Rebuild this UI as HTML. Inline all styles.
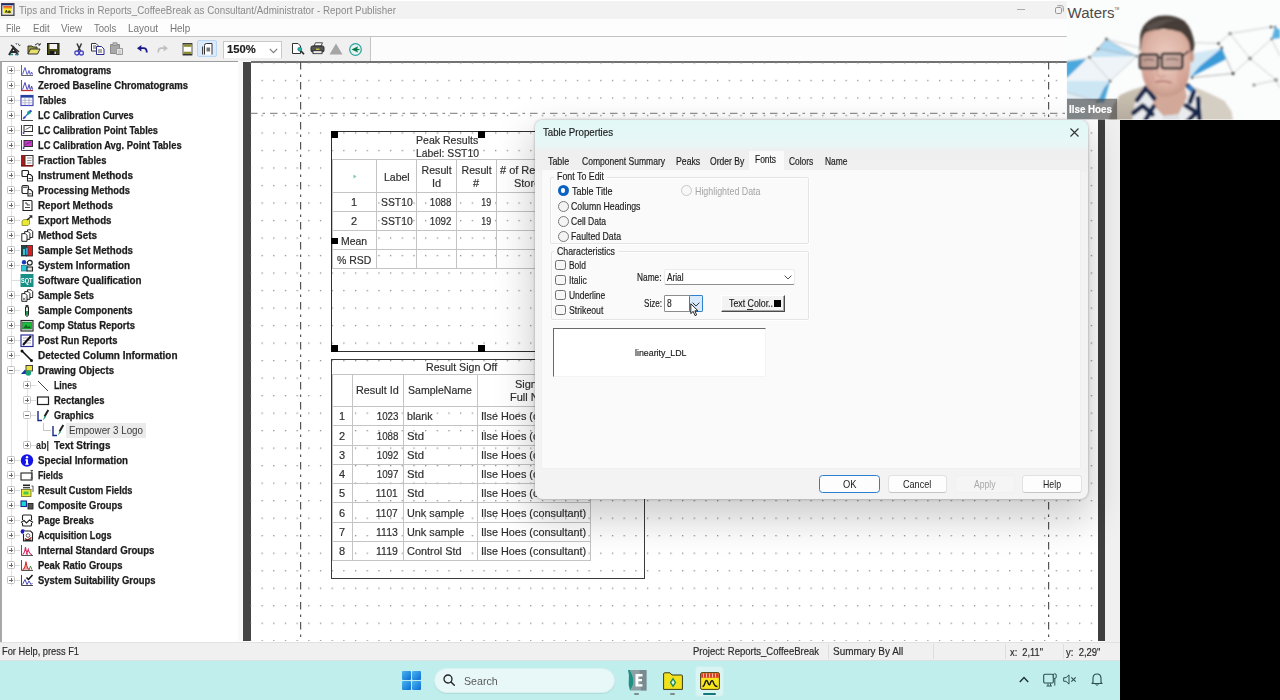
<!DOCTYPE html>
<html lang="en"><head><meta charset="utf-8"><title>Report Publisher</title>
<style>
html,body{margin:0;padding:0;background:#fff;}
body{width:1280px;height:700px;overflow:hidden;font-family:"Liberation Sans",sans-serif;}
#root{position:relative;width:1280px;height:700px;overflow:hidden;background:#fff;}
#root div,#root svg,.t{position:absolute;box-sizing:border-box;}
.t{white-space:pre;}
#root svg{overflow:visible;}

</style></head>
<body>
<div id="root">
<div style="left:0px;top:0px;width:1280px;height:19px;background:#f2f2f2;border-top:1.4px solid #fff;"></div>
<svg style="left:1.3px;top:3px" width="13.6" height="13" viewBox="0 0 13.6 13"><rect x=".65" y=".65" width="12.3" height="11.7" fill="#e9e4ea" stroke="#474749" stroke-width="1.3"/><rect x="1" y=".8" width="11.6" height="1.5" fill="#1c2c70"/><rect x="2.4" y="3.1" width="8.6" height="7.3" fill="#f0f02c"/><rect x="2.4" y="3.1" width="8.6" height="1.7" fill="#e8502a"/><rect x="2.4" y="4.6" width="8.6" height="1" fill="#f4a02a"/><path d="M4.2 9.6 L5.4 7 L6.4 9.6 M7 9.6 Q7 7.6 8.4 7.8 Q9.6 8 9.4 9.6 Z" fill="#3c3c10" stroke="#3c3c10" stroke-width=".8"/></svg>
<span class="t" style="left:19.40px;top:3.60px;font-size:10.3px;line-height:14px;color:#8a8a8a;transform:scaleX(0.9503);transform-origin:0 50%;">Tips and Tricks in Reports_CoffeeBreak as Consultant/Administrator - Report Publisher</span>
<div style="left:1017px;top:8.5px;width:7.5px;height:1px;background:#ababab;"></div>
<svg style="left:1055px;top:5px" width="9" height="9" viewBox="0 0 9 9"><rect x="0.5" y="2.5" width="6" height="6" rx="1.3" fill="none" stroke="#999"/><path d="M2.5 .7 H6.5 Q8.3 .7 8.3 2.5 V6.5" fill="none" stroke="#999"/></svg>
<div style="left:0px;top:19px;width:1280px;height:17px;background:#fdfdfd;"></div>
<span class="t" style="left:6.00px;top:21.50px;font-size:10.3px;line-height:14px;color:#767676;transform:scaleX(0.8798);transform-origin:0 50%;">File</span>
<span class="t" style="left:32.80px;top:21.50px;font-size:10.3px;line-height:14px;color:#767676;transform:scaleX(0.9352);transform-origin:0 50%;">Edit</span>
<span class="t" style="left:61.00px;top:21.50px;font-size:10.3px;line-height:14px;color:#767676;transform:scaleX(0.9485);transform-origin:0 50%;">View</span>
<span class="t" style="left:94.40px;top:21.50px;font-size:10.3px;line-height:14px;color:#767676;transform:scaleX(0.9232);transform-origin:0 50%;">Tools</span>
<span class="t" style="left:128.40px;top:21.50px;font-size:10.3px;line-height:14px;color:#767676;transform:scaleX(0.9702);transform-origin:0 50%;">Layout</span>
<span class="t" style="left:170.30px;top:21.50px;font-size:10.3px;line-height:14px;color:#767676;transform:scaleX(0.9581);transform-origin:0 50%;">Help</span>
<div style="left:0px;top:36px;width:1280px;height:26px;background:#fcfcfc;"></div>
<div style="left:0px;top:36px;width:371px;height:25px;background:#f0f0f0;border-top:1px solid #cfcfcf;border-right:1px solid #c4c4c4;"></div>
<div style="left:0px;top:35.7px;width:1280px;height:1px;background:#c2c2c2;"></div>
<svg style="left:7px;top:42px" width="15" height="14" viewBox="0 0 15 14"><path d="M2 13 L6.5 5.5 L11 13 M4 10 H9" fill="none" stroke="#2a2a2a" stroke-width="2"/><path d="M4 3 L12 10" stroke="#333" stroke-width="1.6"/><path d="M11 1.5 l1 1.8 M13.5 3 l-1.5 .8 M9 1 l.5 1.5" stroke="#555" stroke-width="1"/><path d="M3 12.5 h3 M8 12.5 h3" stroke="#2a8a8a" stroke-width="1.6"/></svg>
<svg style="left:27px;top:42px" width="14" height="13" viewBox="0 0 14 13"><path d="M1 12 V4 H5 L6 5 H10 V7" fill="#9a9a3a" stroke="#333" stroke-width="1"/><path d="M1 12 L3.5 7 H13 L10.5 12 Z" fill="#e6e06a" stroke="#333" stroke-width="1"/><path d="M8 3 q3 -3 5 0 l-1.5 .2 M13 3 l.3 -1.8" fill="none" stroke="#333" stroke-width="1"/></svg>
<svg style="left:46.5px;top:42.5px" width="12.5" height="12" viewBox="0 0 12.5 12"><rect x=".5" y=".5" width="11.5" height="11" fill="#4a4a10" stroke="#1a1a1a"/><rect x="2.5" y="1" width="7.5" height="5" fill="#f4f4f4"/><rect x="3" y="8" width="6.5" height="3.5" fill="#1a1a1a"/><rect x="7.5" y="8.6" width="1.4" height="2.4" fill="#ddd"/></svg>
<svg style="left:74px;top:42.5px" width="10" height="13" viewBox="0 0 10 13"><path d="M3 0.5 L6.5 8 M7.5 0.5 L4 8" stroke="#333" stroke-width="1.5" fill="none"/><circle cx="2.8" cy="10" r="2" fill="none" stroke="#4646c8" stroke-width="1.3"/><circle cx="7.4" cy="10" r="2" fill="none" stroke="#4646c8" stroke-width="1.3"/></svg>
<svg style="left:90.5px;top:42.5px" width="14" height="12" viewBox="0 0 14 12"><path d="M.5 .5 H5 L7 2.5 V8 H.5 Z" fill="#fff" stroke="#333"/><path d="M2 3 H5 M2 5 H5" stroke="#555" stroke-width="1"/><path d="M5.5 3.5 H10.5 L13 6 V11.5 H5.5 Z" fill="#fff" stroke="#2a2a8a"/><path d="M7 7 H11 M7 9 H11" stroke="#555" stroke-width="1"/></svg>
<svg style="left:110px;top:42px" width="13" height="13" viewBox="0 0 13 13"><path d="M.5 2.5 H9.5 V11.5 H.5 Z" fill="#a8a8a8" stroke="#8a8a8a"/><rect x="3" y=".8" width="4" height="2.6" fill="#bdbdbd" stroke="#8a8a8a" stroke-width=".8"/><path d="M6.5 6.5 H12.5 V12.5 H6.5 Z" fill="#e6e6e6" stroke="#9a9a9a"/><path d="M8 9 H11 M8 11 H11" stroke="#aaa" stroke-width=".8"/></svg>
<svg style="left:137px;top:45px" width="11" height="8" viewBox="0 0 11 8"><path d="M2.5 3.2 H6.5 Q9.8 3.2 9.8 7.5" fill="none" stroke="#1a1a8c" stroke-width="1.8"/><path d="M0 3.2 L4.4 0 V6.4 Z" fill="#1a1a8c"/></svg>
<svg style="left:157px;top:45px" width="11" height="8" viewBox="0 0 11 8"><path d="M8.5 3.2 H4.5 Q1.2 3.2 1.2 7.5" fill="none" stroke="#c0c0c0" stroke-width="1.8"/><path d="M11 3.2 L6.6 0 V6.4 Z" fill="#c0c0c0"/></svg>
<svg style="left:181.5px;top:43px" width="11" height="12.5" viewBox="0 0 11 12.5"><rect x="1" y=".5" width="9" height="11.5" fill="#fff" stroke="#444" stroke-width=".9"/><rect x="1" y=".4" width="9" height="1.2" fill="#333"/><rect x="1.5" y="1.6" width="8" height="2.2" fill="#8c8c2c"/><rect x="1.5" y="8.7" width="8" height="2.2" fill="#8c8c2c"/><rect x="1" y="10.9" width="9" height="1.2" fill="#333"/></svg>
<div style="left:197px;top:40px;width:20px;height:17px;background:#dcebfb;border:1px solid #b9d7f5;border-radius:2px;"></div>
<svg style="left:202px;top:43px" width="11" height="12" viewBox="0 0 11 12"><path d="M2.5 11.5 V2.5 Q2.5 .5 4.5 .5 H10 V11.5" fill="#fff" stroke="#333"/><path d="M.6 11.5 V3.5" stroke="#333"/><rect x="4.5" y="4.5" width="3.6" height="4" fill="#777"/></svg>
<div style="left:223px;top:40.5px;width:59px;height:18px;background:#fff;border:1px solid #c9c9c9;border-bottom-color:#f0f0f0;"></div>
<span class="t" style="left:226.50px;top:41.40px;font-size:11.8px;line-height:17px;color:#1c1c1c;font-weight:bold;transform:scaleX(0.9540);transform-origin:0 50%;-webkit-text-stroke:.18px #1c1c1c;">150%</span>
<svg style="left:269px;top:47.5px" width="9" height="6" viewBox="0 0 9 6"><path d="M.8 .8 L4.5 4.6 L8.2 .8" fill="none" stroke="#777" stroke-width="1.1"/></svg>
<svg style="left:291.5px;top:43px" width="13" height="12" viewBox="0 0 13 12"><path d="M.5 .5 H6 L8.5 3 V10.5 H.5 Z" fill="#fff" stroke="#333"/><circle cx="7.8" cy="6.2" r="2" fill="#27b3a5" stroke="#1a6a6a" stroke-width=".6"/><path d="M9 8 L12 11.3" stroke="#222" stroke-width="1.6"/></svg>
<svg style="left:309.5px;top:42px" width="15" height="12.5" viewBox="0 0 15 12.5"><path d="M4 4 L5.5 .8 H12.5 L11 4 Z" fill="#fff" stroke="#333" stroke-width=".9"/><rect x="1" y="4" width="13" height="6" rx="1.5" fill="#555" stroke="#222" stroke-width=".9"/><rect x="3" y="8.7" width="9" height="3" fill="#e8e8e8" stroke="#222" stroke-width=".8"/><rect x="6" y="6.6" width="3.5" height="1.2" fill="#d8d83a"/></svg>
<svg style="left:329px;top:43px" width="14" height="12" viewBox="0 0 14 12"><path d="M7 .5 L13.5 11.5 H.5 Z" fill="#a6a6a6"/></svg>
<svg style="left:348.5px;top:42.5px" width="13" height="13" viewBox="0 0 13 13"><circle cx="6.5" cy="6.5" r="5.8" fill="#e8f4f4" stroke="#27a39a" stroke-width="1.2"/><path d="M2.5 6.5 L9 3.2 L8 6.5 L9 9.6 Z" fill="#0a7a4a"/><path d="M8 6.5 H10.5" stroke="#0a7a4a" stroke-width="1.2"/></svg>
<div style="left:0px;top:61px;width:238px;height:581px;background:#fff;border-top:1px solid #9c9c9c;border-left:2px solid #a8a8a8;"></div>
<div style="left:238px;top:62px;width:5px;height:579px;background:#f9f9f9;"></div>
<div style="left:11px;top:66px;width:1px;height:520px;background:#e2e2e2;"></div>
<div style="left:27px;top:378px;width:1px;height:72px;background:#e2e2e2;"></div>
<div style="left:11px;top:70px;width:9px;height:1px;background:#dcdcdc;"></div>
<div style="left:7.3px;top:66.3px;width:8px;height:8px;background:#fff;border:1px solid #c2c2c2;border-radius:1.5px;"></div>
<div style="left:9.3px;top:69.8px;width:4px;height:1px;background:#6a6a6a;"></div>
<div style="left:10.8px;top:68.3px;width:1px;height:4px;background:#6a6a6a;"></div>
<svg style="left:20px;top:63.8px" width="14" height="13" viewBox="0 0 14 13"><path d="M1.5 1 V11.5 H13" fill="none" stroke="#666" stroke-width="1"/><path d="M2.5 10.5 L5 3.5 L7 10.5 M7.5 10.5 L9 6.5 L10.2 10.5 M10.6 10.5 L11.6 8 L12.6 10.5" fill="none" stroke="#5a5ad0" stroke-width="1"/></svg>
<span class="t" style="left:38.00px;top:63.60px;font-size:10.2px;line-height:14px;color:#1c1c1c;font-weight:bold;transform:scaleX(0.9328);transform-origin:0 50%;-webkit-text-stroke:.25px #1c1c1c;">Chromatograms</span>
<div style="left:11px;top:85px;width:9px;height:1px;background:#dcdcdc;"></div>
<div style="left:7.3px;top:81.3px;width:8px;height:8px;background:#fff;border:1px solid #c2c2c2;border-radius:1.5px;"></div>
<div style="left:9.3px;top:84.8px;width:4px;height:1px;background:#6a6a6a;"></div>
<div style="left:10.8px;top:83.3px;width:1px;height:4px;background:#6a6a6a;"></div>
<svg style="left:20px;top:78.8px" width="14" height="13" viewBox="0 0 14 13"><path d="M1.5 1 V11.5" fill="none" stroke="#666" stroke-width="1"/><path d="M1 11.5 H13" stroke="#c03030" stroke-width="1.3"/><path d="M2.5 10.5 L5 3.5 L7 10.5 M7.5 10.5 L9 5.5 L10.2 10.5 M10.6 10.5 L11.6 7 L12.6 10.5" fill="none" stroke="#4a4ab8" stroke-width="1"/></svg>
<span class="t" style="left:38.00px;top:78.60px;font-size:10.2px;line-height:14px;color:#1c1c1c;font-weight:bold;transform:scaleX(0.9362);transform-origin:0 50%;-webkit-text-stroke:.25px #1c1c1c;">Zeroed Baseline Chromatograms</span>
<div style="left:11px;top:100px;width:9px;height:1px;background:#dcdcdc;"></div>
<div style="left:7.3px;top:96.3px;width:8px;height:8px;background:#fff;border:1px solid #c2c2c2;border-radius:1.5px;"></div>
<div style="left:9.3px;top:99.8px;width:4px;height:1px;background:#6a6a6a;"></div>
<div style="left:10.8px;top:98.3px;width:1px;height:4px;background:#6a6a6a;"></div>
<svg style="left:20px;top:93.8px" width="14" height="13" viewBox="0 0 14 13"><rect x="1" y="1.5" width="12" height="10" fill="#fff" stroke="#4a4ac4" stroke-width="1.2"/><rect x="1" y="1.2" width="12" height="2.4" fill="#1f3f9a"/><path d="M5 4 V11 M9 4 V11 M1.5 6.3 H12.5 M1.5 8.8 H12.5" stroke="#a8a8c8" stroke-width=".8"/></svg>
<span class="t" style="left:38.00px;top:93.60px;font-size:10.2px;line-height:14px;color:#1c1c1c;font-weight:bold;transform:scaleX(0.9039);transform-origin:0 50%;-webkit-text-stroke:.25px #1c1c1c;">Tables</span>
<div style="left:11px;top:115px;width:9px;height:1px;background:#dcdcdc;"></div>
<div style="left:7.3px;top:111.3px;width:8px;height:8px;background:#fff;border:1px solid #c2c2c2;border-radius:1.5px;"></div>
<div style="left:9.3px;top:114.8px;width:4px;height:1px;background:#6a6a6a;"></div>
<div style="left:10.8px;top:113.3px;width:1px;height:4px;background:#6a6a6a;"></div>
<svg style="left:20px;top:108.8px" width="14" height="13" viewBox="0 0 14 13"><path d="M1.5 1 V11.5 H13" fill="none" stroke="#444" stroke-width="1"/><path d="M3 10 L11 1.5" stroke="#3a78c8" stroke-width="1.2"/><path d="M7 3 l3 -2 l1 3 l-3 2z" fill="#18a090"/><circle cx="4.5" cy="8.5" r="1.1" fill="#3a3ac0"/><circle cx="10.8" cy="2.2" r="1" fill="#3a3ac0"/></svg>
<span class="t" style="left:38.00px;top:108.60px;font-size:10.2px;line-height:14px;color:#1c1c1c;font-weight:bold;transform:scaleX(0.8935);transform-origin:0 50%;-webkit-text-stroke:.25px #1c1c1c;">LC Calibration Curves</span>
<div style="left:11px;top:130px;width:9px;height:1px;background:#dcdcdc;"></div>
<div style="left:7.3px;top:126.30000000000001px;width:8px;height:8px;background:#fff;border:1px solid #c2c2c2;border-radius:1.5px;"></div>
<div style="left:9.3px;top:129.8px;width:4px;height:1px;background:#6a6a6a;"></div>
<div style="left:10.8px;top:128.3px;width:1px;height:4px;background:#6a6a6a;"></div>
<svg style="left:20px;top:123.80000000000001px" width="14" height="13" viewBox="0 0 14 13"><path d="M1.5 1 V11.5 H13" fill="none" stroke="#444" stroke-width="1"/><rect x="4" y="1.5" width="8.5" height="6" fill="#fff" stroke="#333" stroke-width="1"/><path d="M5.5 5.5 L11 2.8" stroke="#666" stroke-width=".9"/><circle cx="3.6" cy="9" r="1" fill="#3a3ac0"/></svg>
<span class="t" style="left:38.00px;top:123.60px;font-size:10.2px;line-height:14px;color:#1c1c1c;font-weight:bold;transform:scaleX(0.9073);transform-origin:0 50%;-webkit-text-stroke:.25px #1c1c1c;">LC Calibration Point Tables</span>
<div style="left:11px;top:145px;width:9px;height:1px;background:#dcdcdc;"></div>
<div style="left:7.3px;top:141.3px;width:8px;height:8px;background:#fff;border:1px solid #c2c2c2;border-radius:1.5px;"></div>
<div style="left:9.3px;top:144.8px;width:4px;height:1px;background:#6a6a6a;"></div>
<div style="left:10.8px;top:143.3px;width:1px;height:4px;background:#6a6a6a;"></div>
<svg style="left:20px;top:138.8px" width="14" height="13" viewBox="0 0 14 13"><path d="M1.5 1 V11.5 H13" fill="none" stroke="#444" stroke-width="1"/><rect x="4" y="1.5" width="8.5" height="6" fill="#c83ac8" stroke="#333" stroke-width="1"/><path d="M5.5 5.5 L11 2.8" stroke="#602a80" stroke-width=".9"/><circle cx="3.6" cy="9" r="1" fill="#3a3ac0"/></svg>
<span class="t" style="left:38.00px;top:138.60px;font-size:10.2px;line-height:14px;color:#1c1c1c;font-weight:bold;transform:scaleX(0.9180);transform-origin:0 50%;-webkit-text-stroke:.25px #1c1c1c;">LC Calibration Avg. Point Tables</span>
<div style="left:11px;top:160px;width:9px;height:1px;background:#dcdcdc;"></div>
<div style="left:7.3px;top:156.3px;width:8px;height:8px;background:#fff;border:1px solid #c2c2c2;border-radius:1.5px;"></div>
<div style="left:9.3px;top:159.8px;width:4px;height:1px;background:#6a6a6a;"></div>
<div style="left:10.8px;top:158.3px;width:1px;height:4px;background:#6a6a6a;"></div>
<svg style="left:20px;top:153.8px" width="14" height="13" viewBox="0 0 14 13"><rect x="1" y="1" width="4" height="11" fill="#b01818"/><rect x="5" y="1.5" width="8" height="10" fill="#fff" stroke="#333" stroke-width="1"/><path d="M7 4 H11.5 M7 6.5 H11.5 M7 9 H11.5" stroke="#777" stroke-width=".8"/><rect x="1" y="11" width="12" height="1.6" fill="#801010"/></svg>
<span class="t" style="left:38.00px;top:153.60px;font-size:10.2px;line-height:14px;color:#1c1c1c;font-weight:bold;transform:scaleX(0.9189);transform-origin:0 50%;-webkit-text-stroke:.25px #1c1c1c;">Fraction Tables</span>
<div style="left:11px;top:175px;width:9px;height:1px;background:#dcdcdc;"></div>
<div style="left:7.3px;top:171.3px;width:8px;height:8px;background:#fff;border:1px solid #c2c2c2;border-radius:1.5px;"></div>
<div style="left:9.3px;top:174.8px;width:4px;height:1px;background:#6a6a6a;"></div>
<div style="left:10.8px;top:173.3px;width:1px;height:4px;background:#6a6a6a;"></div>
<svg style="left:20px;top:168.8px" width="14" height="13" viewBox="0 0 14 13"><rect x="2" y="1.5" width="6.5" height="6" rx="1" fill="#fff" stroke="#222" stroke-width="1.2"/><path d="M7.5 5.5 H10.5 L12.5 7.5 V12 H7.5 Z" fill="#fff" stroke="#222" stroke-width="1.1"/><path d="M8.5 9.5 H11.5" stroke="#222" stroke-width=".9"/></svg>
<span class="t" style="left:38.00px;top:168.60px;font-size:10.2px;line-height:14px;color:#1c1c1c;font-weight:bold;transform:scaleX(0.9758);transform-origin:0 50%;-webkit-text-stroke:.25px #1c1c1c;">Instrument Methods</span>
<div style="left:11px;top:190px;width:9px;height:1px;background:#dcdcdc;"></div>
<div style="left:7.3px;top:186.3px;width:8px;height:8px;background:#fff;border:1px solid #c2c2c2;border-radius:1.5px;"></div>
<div style="left:9.3px;top:189.8px;width:4px;height:1px;background:#6a6a6a;"></div>
<div style="left:10.8px;top:188.3px;width:1px;height:4px;background:#6a6a6a;"></div>
<svg style="left:20px;top:183.8px" width="14" height="13" viewBox="0 0 14 13"><rect x="2" y="1.5" width="6.5" height="8" rx="1.5" fill="#fff" stroke="#222" stroke-width="1.2"/><path d="M3 3.2 H7.5" stroke="#222" stroke-width="1"/><path d="M8 5.5 H10.5 L12.5 7.5 V12 H8 Z" fill="#fff" stroke="#222" stroke-width="1.1"/><path d="M9 9.8 H11.5" stroke="#222" stroke-width=".9"/></svg>
<span class="t" style="left:38.00px;top:183.60px;font-size:10.2px;line-height:14px;color:#1c1c1c;font-weight:bold;transform:scaleX(0.9233);transform-origin:0 50%;-webkit-text-stroke:.25px #1c1c1c;">Processing Methods</span>
<div style="left:11px;top:205px;width:9px;height:1px;background:#dcdcdc;"></div>
<div style="left:7.3px;top:201.3px;width:8px;height:8px;background:#fff;border:1px solid #c2c2c2;border-radius:1.5px;"></div>
<div style="left:9.3px;top:204.8px;width:4px;height:1px;background:#6a6a6a;"></div>
<div style="left:10.8px;top:203.3px;width:1px;height:4px;background:#6a6a6a;"></div>
<svg style="left:20px;top:198.8px" width="14" height="13" viewBox="0 0 14 13"><path d="M3 1.5 H11 Q12 1.5 12 2.5 V11.5 H3 Z" fill="#fff" stroke="#222" stroke-width="1.1"/><path d="M5 4 H7 V6 H10 M5 8.5 H10" fill="none" stroke="#333" stroke-width=".9"/></svg>
<span class="t" style="left:38.00px;top:198.60px;font-size:10.2px;line-height:14px;color:#1c1c1c;font-weight:bold;transform:scaleX(0.9672);transform-origin:0 50%;-webkit-text-stroke:.25px #1c1c1c;">Report Methods</span>
<div style="left:11px;top:220px;width:9px;height:1px;background:#dcdcdc;"></div>
<div style="left:7.3px;top:216.3px;width:8px;height:8px;background:#fff;border:1px solid #c2c2c2;border-radius:1.5px;"></div>
<div style="left:9.3px;top:219.8px;width:4px;height:1px;background:#6a6a6a;"></div>
<div style="left:10.8px;top:218.3px;width:1px;height:4px;background:#6a6a6a;"></div>
<svg style="left:20px;top:213.8px" width="14" height="13" viewBox="0 0 14 13"><path d="M2 7 L4 5.5 H9.5 V10 L8 11.5 H2 Z" fill="#e8e838" stroke="#8a8a20" stroke-width=".8"/><path d="M7 6 L11 2.5" stroke="#222" stroke-width="1.3"/><path d="M9 1.2 H12.3 V4.5 Z" fill="#222"/></svg>
<span class="t" style="left:38.00px;top:213.60px;font-size:10.2px;line-height:14px;color:#1c1c1c;font-weight:bold;transform:scaleX(0.9547);transform-origin:0 50%;-webkit-text-stroke:.25px #1c1c1c;">Export Methods</span>
<div style="left:11px;top:235px;width:9px;height:1px;background:#dcdcdc;"></div>
<div style="left:7.3px;top:231.3px;width:8px;height:8px;background:#fff;border:1px solid #c2c2c2;border-radius:1.5px;"></div>
<div style="left:9.3px;top:234.8px;width:4px;height:1px;background:#6a6a6a;"></div>
<div style="left:10.8px;top:233.3px;width:1px;height:4px;background:#6a6a6a;"></div>
<svg style="left:20px;top:228.8px" width="14" height="13" viewBox="0 0 14 13"><path d="M7.5 .8 H11 L12.7 2.5 V8.5 H7.5 Z" fill="#fff" stroke="#222" stroke-width="1"/><path d="M4.7 2.6 H8.2 L9.9 4.3 V10.3 H4.7 Z" fill="#fff" stroke="#222" stroke-width="1"/><path d="M1.8 4.6 H5.3 L7 6.3 V12.3 H1.8 Z" fill="#fff" stroke="#222" stroke-width="1"/></svg>
<span class="t" style="left:38.00px;top:228.60px;font-size:10.2px;line-height:14px;color:#1c1c1c;font-weight:bold;transform:scaleX(0.9739);transform-origin:0 50%;-webkit-text-stroke:.25px #1c1c1c;">Method Sets</span>
<div style="left:11px;top:250px;width:9px;height:1px;background:#dcdcdc;"></div>
<div style="left:7.3px;top:246.3px;width:8px;height:8px;background:#fff;border:1px solid #c2c2c2;border-radius:1.5px;"></div>
<div style="left:9.3px;top:249.8px;width:4px;height:1px;background:#6a6a6a;"></div>
<div style="left:10.8px;top:248.3px;width:1px;height:4px;background:#6a6a6a;"></div>
<svg style="left:20px;top:243.8px" width="14" height="13" viewBox="0 0 14 13"><rect x="1.5" y="1.5" width="5" height="10.5" fill="#1a4a4a" stroke="#222" stroke-width=".8"/><rect x="6.5" y="1.5" width="6" height="10.5" fill="#d82020" stroke="#222" stroke-width=".8"/><rect x="3" y="5" width="2.2" height="6" fill="#38c8d8"/><rect x="5.8" y="3.5" width="2.2" height="7.5" fill="#38a8d8" stroke="#1a3a5a" stroke-width=".5"/></svg>
<span class="t" style="left:38.00px;top:243.60px;font-size:10.2px;line-height:14px;color:#1c1c1c;font-weight:bold;transform:scaleX(0.9534);transform-origin:0 50%;-webkit-text-stroke:.25px #1c1c1c;">Sample Set Methods</span>
<div style="left:11px;top:265px;width:9px;height:1px;background:#dcdcdc;"></div>
<div style="left:7.3px;top:261.3px;width:8px;height:8px;background:#fff;border:1px solid #c2c2c2;border-radius:1.5px;"></div>
<div style="left:9.3px;top:264.8px;width:4px;height:1px;background:#6a6a6a;"></div>
<div style="left:10.8px;top:263.3px;width:1px;height:4px;background:#6a6a6a;"></div>
<svg style="left:20px;top:258.8px" width="14" height="13" viewBox="0 0 14 13"><circle cx="4" cy="3.2" r="2.2" fill="#1a3ab8"/><rect x="1.5" y="6.5" width="6" height="5.5" fill="#28c8d8" stroke="#1a5a6a" stroke-width=".6"/><circle cx="9.8" cy="3.8" r="2.4" fill="#fff" stroke="#222" stroke-width="1.2"/><path d="M7 8 H12.5 V12 H7 Z" fill="#ddd" stroke="#222" stroke-width="1.1"/></svg>
<span class="t" style="left:38.00px;top:258.60px;font-size:10.2px;line-height:14px;color:#1c1c1c;font-weight:bold;transform:scaleX(0.9673);transform-origin:0 50%;-webkit-text-stroke:.25px #1c1c1c;">System Information</span>
<div style="left:11px;top:280px;width:9px;height:1px;background:#dcdcdc;"></div>
<svg style="left:20px;top:273.8px" width="14" height="13" viewBox="0 0 14 13"><rect x="0.5" y="0" width="13" height="13" fill="#189088"/></svg>
<span class="t" style="left:21.30px;top:275.30px;font-size:8px;line-height:11px;color:#fff;font-weight:bold;transform:scaleX(0.6990);transform-origin:0 50%;">SQT</span>
<span class="t" style="left:38.00px;top:273.60px;font-size:10.2px;line-height:14px;color:#1c1c1c;font-weight:bold;transform:scaleX(0.9622);transform-origin:0 50%;-webkit-text-stroke:.25px #1c1c1c;">Software Qualification</span>
<div style="left:11px;top:295px;width:9px;height:1px;background:#dcdcdc;"></div>
<div style="left:7.3px;top:291.3px;width:8px;height:8px;background:#fff;border:1px solid #c2c2c2;border-radius:1.5px;"></div>
<div style="left:9.3px;top:294.8px;width:4px;height:1px;background:#6a6a6a;"></div>
<div style="left:10.8px;top:293.3px;width:1px;height:4px;background:#6a6a6a;"></div>
<svg style="left:20px;top:288.8px" width="14" height="13" viewBox="0 0 14 13"><path d="M7.5 .8 H11 L12.7 2.5 V8.5 H7.5 Z" fill="#fff" stroke="#222" stroke-width="1"/><path d="M4.7 2.6 H8.2 L9.9 4.3 V10.3 H4.7 Z" fill="#fff" stroke="#222" stroke-width="1"/><path d="M1.8 4.6 H5.3 L7 6.3 V12.3 H1.8 Z" fill="#fff" stroke="#222" stroke-width="1"/><path d="M3 9 L5.5 11 M3 11 L5.5 9" stroke="#555" stroke-width=".8"/></svg>
<span class="t" style="left:38.00px;top:288.60px;font-size:10.2px;line-height:14px;color:#1c1c1c;font-weight:bold;transform:scaleX(0.9242);transform-origin:0 50%;-webkit-text-stroke:.25px #1c1c1c;">Sample Sets</span>
<div style="left:11px;top:310px;width:9px;height:1px;background:#dcdcdc;"></div>
<div style="left:7.3px;top:306.3px;width:8px;height:8px;background:#fff;border:1px solid #c2c2c2;border-radius:1.5px;"></div>
<div style="left:9.3px;top:309.8px;width:4px;height:1px;background:#6a6a6a;"></div>
<div style="left:10.8px;top:308.3px;width:1px;height:4px;background:#6a6a6a;"></div>
<svg style="left:20px;top:303.8px" width="14" height="13" viewBox="0 0 14 13"><path d="M5.5 3 H8.5 V10 Q8.5 12.3 7 12.3 Q5.5 12.3 5.5 10 Z" fill="#e8f0e8" stroke="#222" stroke-width="1"/><rect x="5.6" y="1" width="2.8" height="2" fill="#333"/><path d="M6 7 H8 V10 Q8 11.5 7 11.5 Q6 11.5 6 10 Z" fill="#18a050"/></svg>
<span class="t" style="left:38.00px;top:303.60px;font-size:10.2px;line-height:14px;color:#1c1c1c;font-weight:bold;transform:scaleX(0.9326);transform-origin:0 50%;-webkit-text-stroke:.25px #1c1c1c;">Sample Components</span>
<div style="left:11px;top:325px;width:9px;height:1px;background:#dcdcdc;"></div>
<div style="left:7.3px;top:321.3px;width:8px;height:8px;background:#fff;border:1px solid #c2c2c2;border-radius:1.5px;"></div>
<div style="left:9.3px;top:324.8px;width:4px;height:1px;background:#6a6a6a;"></div>
<div style="left:10.8px;top:323.3px;width:1px;height:4px;background:#6a6a6a;"></div>
<svg style="left:20px;top:318.8px" width="14" height="13" viewBox="0 0 14 13"><rect x="1" y="1.5" width="12" height="10.5" fill="#e8e8e8" stroke="#222" stroke-width="1.1"/><rect x="2.6" y="3.2" width="8.8" height="6.8" fill="#18c038" stroke="#1a5a2a" stroke-width=".6"/><path d="M3.5 9 L6 5.5 L8 8 L9.5 6.5 L10.8 9" fill="#0a6a20"/></svg>
<span class="t" style="left:38.00px;top:318.60px;font-size:10.2px;line-height:14px;color:#1c1c1c;font-weight:bold;transform:scaleX(0.9313);transform-origin:0 50%;-webkit-text-stroke:.25px #1c1c1c;">Comp Status Reports</span>
<div style="left:11px;top:340px;width:9px;height:1px;background:#dcdcdc;"></div>
<div style="left:7.3px;top:336.3px;width:8px;height:8px;background:#fff;border:1px solid #c2c2c2;border-radius:1.5px;"></div>
<div style="left:9.3px;top:339.8px;width:4px;height:1px;background:#6a6a6a;"></div>
<div style="left:10.8px;top:338.3px;width:1px;height:4px;background:#6a6a6a;"></div>
<svg style="left:20px;top:333.8px" width="14" height="13" viewBox="0 0 14 13"><rect x="1" y="1" width="12" height="11.5" fill="#fff" stroke="#2a2a9a" stroke-width="1.2"/><path d="M3 4 H11 M3 6.5 H11 M3 9 H11" stroke="#9a9ab0" stroke-width=".8"/><path d="M3 11 L11 2" stroke="#111" stroke-width="2"/></svg>
<span class="t" style="left:38.00px;top:333.60px;font-size:10.2px;line-height:14px;color:#1c1c1c;font-weight:bold;transform:scaleX(0.9239);transform-origin:0 50%;-webkit-text-stroke:.25px #1c1c1c;">Post Run Reports</span>
<div style="left:11px;top:355px;width:9px;height:1px;background:#dcdcdc;"></div>
<div style="left:7.3px;top:351.3px;width:8px;height:8px;background:#fff;border:1px solid #c2c2c2;border-radius:1.5px;"></div>
<div style="left:9.3px;top:354.8px;width:4px;height:1px;background:#6a6a6a;"></div>
<div style="left:10.8px;top:353.3px;width:1px;height:4px;background:#6a6a6a;"></div>
<svg style="left:20px;top:348.8px" width="14" height="13" viewBox="0 0 14 13"><path d="M2 2 L11.5 11.5" stroke="#111" stroke-width="1.6"/><circle cx="2" cy="2" r="1.5" fill="#111"/><circle cx="11.5" cy="11.5" r="1.5" fill="#111"/></svg>
<span class="t" style="left:38.00px;top:348.60px;font-size:10.2px;line-height:14px;color:#1c1c1c;font-weight:bold;transform:scaleX(0.9780);transform-origin:0 50%;-webkit-text-stroke:.25px #1c1c1c;">Detected Column Information</span>
<div style="left:11px;top:370px;width:9px;height:1px;background:#dcdcdc;"></div>
<div style="left:7.3px;top:366.3px;width:8px;height:8px;background:#fff;border:1px solid #c2c2c2;border-radius:1.5px;"></div>
<div style="left:9.3px;top:369.8px;width:4px;height:1px;background:#6a6a6a;"></div>
<svg style="left:20px;top:363.8px" width="14" height="13" viewBox="0 0 14 13"><rect x="6" y="1.5" width="6.5" height="5.5" fill="#e8e040" stroke="#333" stroke-width=".9"/><path d="M1 10 L5 5.5 L8 10 Z" fill="#1a3a9a"/><circle cx="8.3" cy="9" r="2.8" fill="#18a078"/></svg>
<span class="t" style="left:38.00px;top:363.60px;font-size:10.2px;line-height:14px;color:#1c1c1c;font-weight:bold;transform:scaleX(0.9454);transform-origin:0 50%;-webkit-text-stroke:.25px #1c1c1c;">Drawing Objects</span>
<div style="left:27px;top:385px;width:9px;height:1px;background:#dcdcdc;"></div>
<div style="left:23.3px;top:381.3px;width:8px;height:8px;background:#fff;border:1px solid #c2c2c2;border-radius:1.5px;"></div>
<div style="left:25.3px;top:384.8px;width:4px;height:1px;background:#6a6a6a;"></div>
<div style="left:26.8px;top:383.3px;width:1px;height:4px;background:#6a6a6a;"></div>
<svg style="left:36px;top:378.8px" width="14" height="13" viewBox="0 0 14 13"><path d="M2 2 L12 12" stroke="#444" stroke-width="1"/></svg>
<span class="t" style="left:53.60px;top:378.60px;font-size:10.2px;line-height:14px;color:#1c1c1c;font-weight:bold;transform:scaleX(0.8606);transform-origin:0 50%;-webkit-text-stroke:.25px #1c1c1c;">Lines</span>
<div style="left:27px;top:400px;width:9px;height:1px;background:#dcdcdc;"></div>
<div style="left:23.3px;top:396.3px;width:8px;height:8px;background:#fff;border:1px solid #c2c2c2;border-radius:1.5px;"></div>
<div style="left:25.3px;top:399.8px;width:4px;height:1px;background:#6a6a6a;"></div>
<div style="left:26.8px;top:398.3px;width:1px;height:4px;background:#6a6a6a;"></div>
<svg style="left:36px;top:393.8px" width="14" height="13" viewBox="0 0 14 13"><rect x="1.5" y="3" width="11" height="7.5" fill="#fff" stroke="#222" stroke-width="1.2"/></svg>
<span class="t" style="left:53.60px;top:393.60px;font-size:10.2px;line-height:14px;color:#1c1c1c;font-weight:bold;transform:scaleX(0.9272);transform-origin:0 50%;-webkit-text-stroke:.25px #1c1c1c;">Rectangles</span>
<div style="left:27px;top:415px;width:9px;height:1px;background:#dcdcdc;"></div>
<div style="left:23.3px;top:411.3px;width:8px;height:8px;background:#fff;border:1px solid #c2c2c2;border-radius:1.5px;"></div>
<div style="left:25.3px;top:414.8px;width:4px;height:1px;background:#6a6a6a;"></div>
<svg style="left:36px;top:408.8px" width="14" height="13" viewBox="0 0 14 13"><path d="M2 2 V11.5 H6" fill="none" stroke="#1a2a8a" stroke-width="1.4"/><path d="M12.3 1 L8.5 7.5" stroke="#222" stroke-width="2"/><path d="M8.8 6.5 L6.8 11.5 L10 8" fill="#18a078"/></svg>
<span class="t" style="left:53.60px;top:408.60px;font-size:10.2px;line-height:14px;color:#1c1c1c;font-weight:bold;transform:scaleX(0.9033);transform-origin:0 50%;-webkit-text-stroke:.25px #1c1c1c;">Graphics</span>
<div style="left:43px;top:423.3px;width:1px;height:8px;background:#c8c8c8;"></div>
<div style="left:43px;top:430px;width:8px;height:1px;background:#c8c8c8;"></div>
<svg style="left:51px;top:423.8px" width="14" height="13" viewBox="0 0 14 13"><path d="M2 2 V11.5 H6" fill="none" stroke="#1a2a8a" stroke-width="1.4"/><path d="M12.3 1 L8.5 7.5" stroke="#222" stroke-width="2"/><path d="M8.8 6.5 L6.8 11.5 L10 8" fill="#18a078"/></svg>
<div style="left:66px;top:422.8px;width:80px;height:15px;background:#ebebeb;"></div>
<span class="t" style="left:69.00px;top:423.60px;font-size:10.2px;line-height:14px;color:#3a3a3a;transform:scaleX(0.9606);transform-origin:0 50%;">Empower 3 Logo</span>
<div style="left:27px;top:445px;width:9px;height:1px;background:#dcdcdc;"></div>
<div style="left:23.3px;top:441.3px;width:8px;height:8px;background:#fff;border:1px solid #c2c2c2;border-radius:1.5px;"></div>
<div style="left:25.3px;top:444.8px;width:4px;height:1px;background:#6a6a6a;"></div>
<div style="left:26.8px;top:443.3px;width:1px;height:4px;background:#6a6a6a;"></div>
<span class="t" style="left:36.00px;top:438.60px;font-size:10.2px;line-height:14px;color:#222;font-weight:bold;transform:scaleX(0.8814);transform-origin:0 50%;">ab|</span>
<span class="t" style="left:53.60px;top:438.60px;font-size:10.2px;line-height:14px;color:#1c1c1c;font-weight:bold;transform:scaleX(0.9703);transform-origin:0 50%;-webkit-text-stroke:.25px #1c1c1c;">Text Strings</span>
<div style="left:11px;top:460px;width:9px;height:1px;background:#dcdcdc;"></div>
<div style="left:7.3px;top:456.3px;width:8px;height:8px;background:#fff;border:1px solid #c2c2c2;border-radius:1.5px;"></div>
<div style="left:9.3px;top:459.8px;width:4px;height:1px;background:#6a6a6a;"></div>
<div style="left:10.8px;top:458.3px;width:1px;height:4px;background:#6a6a6a;"></div>
<svg style="left:20px;top:453.8px" width="14" height="13" viewBox="0 0 14 13"><circle cx="7" cy="6.5" r="6.2" fill="#1414e8"/><rect x="6" y="5.4" width="2" height="5" fill="#fff"/><rect x="5.2" y="5.4" width="2" height="1.2" fill="#fff"/><rect x="5.2" y="9.6" width="3.6" height="1.1" fill="#fff"/><circle cx="7" cy="3.3" r="1.2" fill="#fff"/></svg>
<span class="t" style="left:38.00px;top:453.60px;font-size:10.2px;line-height:14px;color:#1c1c1c;font-weight:bold;transform:scaleX(0.9519);transform-origin:0 50%;-webkit-text-stroke:.25px #1c1c1c;">Special Information</span>
<div style="left:11px;top:475px;width:9px;height:1px;background:#dcdcdc;"></div>
<div style="left:7.3px;top:471.3px;width:8px;height:8px;background:#fff;border:1px solid #c2c2c2;border-radius:1.5px;"></div>
<div style="left:9.3px;top:474.8px;width:4px;height:1px;background:#6a6a6a;"></div>
<div style="left:10.8px;top:473.3px;width:1px;height:4px;background:#6a6a6a;"></div>
<svg style="left:20px;top:468.8px" width="14" height="13" viewBox="0 0 14 13"><rect x="1" y="4" width="11" height="7" fill="#fff" stroke="#222" stroke-width="1.1"/><path d="M10.5 1.5 H13 M11.8 1.5 V9 M10.5 9 H13" stroke="#444" stroke-width=".9"/></svg>
<span class="t" style="left:38.00px;top:468.60px;font-size:10.2px;line-height:14px;color:#1c1c1c;font-weight:bold;transform:scaleX(0.8488);transform-origin:0 50%;-webkit-text-stroke:.25px #1c1c1c;">Fields</span>
<div style="left:11px;top:490px;width:9px;height:1px;background:#dcdcdc;"></div>
<div style="left:7.3px;top:486.3px;width:8px;height:8px;background:#fff;border:1px solid #c2c2c2;border-radius:1.5px;"></div>
<div style="left:9.3px;top:489.8px;width:4px;height:1px;background:#6a6a6a;"></div>
<div style="left:10.8px;top:488.3px;width:1px;height:4px;background:#6a6a6a;"></div>
<svg style="left:20px;top:483.8px" width="14" height="13" viewBox="0 0 14 13"><rect x="3" y="0.5" width="7" height="1.6" fill="#222"/><rect x="3" y="3" width="7" height="1.4" fill="#444"/><path d="M11.5 2 H13 V8" fill="none" stroke="#444" stroke-width=".9"/><rect x="1.5" y="5.5" width="9.5" height="7" fill="#e8e838" stroke="#6a6a20" stroke-width=".8"/><rect x="3.5" y="7.5" width="5" height="3" fill="#48c848"/></svg>
<span class="t" style="left:38.00px;top:483.60px;font-size:10.2px;line-height:14px;color:#1c1c1c;font-weight:bold;transform:scaleX(0.9073);transform-origin:0 50%;-webkit-text-stroke:.25px #1c1c1c;">Result Custom Fields</span>
<div style="left:11px;top:505px;width:9px;height:1px;background:#dcdcdc;"></div>
<div style="left:7.3px;top:501.3px;width:8px;height:8px;background:#fff;border:1px solid #c2c2c2;border-radius:1.5px;"></div>
<div style="left:9.3px;top:504.8px;width:4px;height:1px;background:#6a6a6a;"></div>
<div style="left:10.8px;top:503.3px;width:1px;height:4px;background:#6a6a6a;"></div>
<svg style="left:20px;top:498.8px" width="14" height="13" viewBox="0 0 14 13"><rect x="1" y="2" width="5.5" height="5.5" fill="#18d8d8" stroke="#1a2a8a" stroke-width="1.1"/><rect x="8" y="4.5" width="5" height="5.5" fill="#555" stroke="#222" stroke-width=".9"/></svg>
<span class="t" style="left:38.00px;top:498.60px;font-size:10.2px;line-height:14px;color:#1c1c1c;font-weight:bold;transform:scaleX(0.9215);transform-origin:0 50%;-webkit-text-stroke:.25px #1c1c1c;">Composite Groups</span>
<div style="left:11px;top:520px;width:9px;height:1px;background:#dcdcdc;"></div>
<div style="left:7.3px;top:516.3px;width:8px;height:8px;background:#fff;border:1px solid #c2c2c2;border-radius:1.5px;"></div>
<div style="left:9.3px;top:519.8px;width:4px;height:1px;background:#6a6a6a;"></div>
<div style="left:10.8px;top:518.3px;width:1px;height:4px;background:#6a6a6a;"></div>
<svg style="left:20px;top:513.8px" width="14" height="13" viewBox="0 0 14 13"><path d="M2.5 6 V2 Q2.5 1 3.5 1 H10.5 Q11.5 1 11.5 2 V6 M2.5 9 V11 Q2.5 12 3.5 12 H10.5 Q11.5 12 11.5 11 V9" fill="#fff" stroke="#222" stroke-width="1.1"/><path d="M1 8.5 L4 6.5 L6.5 9 L9.5 6 L13 8.5" fill="none" stroke="#222" stroke-width="1.1"/></svg>
<span class="t" style="left:38.00px;top:513.60px;font-size:10.2px;line-height:14px;color:#1c1c1c;font-weight:bold;transform:scaleX(0.9155);transform-origin:0 50%;-webkit-text-stroke:.25px #1c1c1c;">Page Breaks</span>
<div style="left:11px;top:535px;width:9px;height:1px;background:#dcdcdc;"></div>
<div style="left:7.3px;top:531.3px;width:8px;height:8px;background:#fff;border:1px solid #c2c2c2;border-radius:1.5px;"></div>
<div style="left:9.3px;top:534.8px;width:4px;height:1px;background:#6a6a6a;"></div>
<div style="left:10.8px;top:533.3px;width:1px;height:4px;background:#6a6a6a;"></div>
<svg style="left:20px;top:528.8px" width="14" height="13" viewBox="0 0 14 13"><circle cx="2.8" cy="2.5" r="2.2" fill="#1a1ac8"/><path d="M4.5 2 H10.5 L12.5 4 V12 H3.5 V5" fill="#fff" stroke="#222" stroke-width="1.1"/><circle cx="8" cy="6.5" r="1.8" fill="none" stroke="#555" stroke-width=".9"/><path d="M5 9.5 L7.5 11 L11.5 8.5" fill="none" stroke="#b02020" stroke-width="1.3"/><rect x="4.5" y="10.5" width="7" height="1.5" fill="#222"/></svg>
<span class="t" style="left:38.00px;top:528.60px;font-size:10.2px;line-height:14px;color:#1c1c1c;font-weight:bold;transform:scaleX(0.8894);transform-origin:0 50%;-webkit-text-stroke:.25px #1c1c1c;">Acquisition Logs</span>
<div style="left:11px;top:550px;width:9px;height:1px;background:#dcdcdc;"></div>
<div style="left:7.3px;top:546.3px;width:8px;height:8px;background:#fff;border:1px solid #c2c2c2;border-radius:1.5px;"></div>
<div style="left:9.3px;top:549.8px;width:4px;height:1px;background:#6a6a6a;"></div>
<div style="left:10.8px;top:548.3px;width:1px;height:4px;background:#6a6a6a;"></div>
<svg style="left:20px;top:543.8px" width="14" height="13" viewBox="0 0 14 13"><path d="M1.5 1 V11.5 H13" fill="none" stroke="#555" stroke-width="1"/><path d="M2.5 10.5 Q4.5 10 5.5 3 Q6.5 10 8 10.5 M6 10.5 Q7.5 8 8.3 5.5 Q9.3 10 12 10.8" fill="none" stroke="#d82868" stroke-width="1.1"/></svg>
<span class="t" style="left:38.00px;top:543.60px;font-size:10.2px;line-height:14px;color:#1c1c1c;font-weight:bold;transform:scaleX(0.9484);transform-origin:0 50%;-webkit-text-stroke:.25px #1c1c1c;">Internal Standard Groups</span>
<div style="left:11px;top:565px;width:9px;height:1px;background:#dcdcdc;"></div>
<div style="left:7.3px;top:561.3px;width:8px;height:8px;background:#fff;border:1px solid #c2c2c2;border-radius:1.5px;"></div>
<div style="left:9.3px;top:564.8px;width:4px;height:1px;background:#6a6a6a;"></div>
<div style="left:10.8px;top:563.3px;width:1px;height:4px;background:#6a6a6a;"></div>
<svg style="left:20px;top:558.8px" width="14" height="13" viewBox="0 0 14 13"><path d="M1.5 1 V11.5 H13" fill="none" stroke="#555" stroke-width="1"/><path d="M2.5 10.8 Q5 10 6 2.5 Q7 10 9.5 10.8" fill="#f0a0a0" stroke="#d03030" stroke-width="1.1"/><path d="M9 10.8 L10.5 7 L12 10.8" fill="none" stroke="#3a8a3a" stroke-width=".9"/></svg>
<span class="t" style="left:38.00px;top:558.60px;font-size:10.2px;line-height:14px;color:#1c1c1c;font-weight:bold;transform:scaleX(0.9270);transform-origin:0 50%;-webkit-text-stroke:.25px #1c1c1c;">Peak Ratio Groups</span>
<div style="left:11px;top:580px;width:9px;height:1px;background:#dcdcdc;"></div>
<div style="left:7.3px;top:576.3px;width:8px;height:8px;background:#fff;border:1px solid #c2c2c2;border-radius:1.5px;"></div>
<div style="left:9.3px;top:579.8px;width:4px;height:1px;background:#6a6a6a;"></div>
<div style="left:10.8px;top:578.3px;width:1px;height:4px;background:#6a6a6a;"></div>
<svg style="left:20px;top:573.8px" width="14" height="13" viewBox="0 0 14 13"><path d="M1.5 1 V11.5 H13" fill="none" stroke="#444" stroke-width="1"/><path d="M2.5 10.5 L5 5.5 L7 10.5 L9 7 L11 10.5 L12.5 9" fill="none" stroke="#4a4ab8" stroke-width="1"/><path d="M6.5 3.5 L8.5 5.5 L12.5 1" fill="none" stroke="#111" stroke-width="1.5"/></svg>
<span class="t" style="left:38.00px;top:573.60px;font-size:10.2px;line-height:14px;color:#1c1c1c;font-weight:bold;transform:scaleX(0.9266);transform-origin:0 50%;-webkit-text-stroke:.25px #1c1c1c;">System Suitability Groups</span>
<div style="left:243px;top:62px;width:7.5px;height:579px;background:#454545;"></div>
<div style="left:250.5px;top:61.4px;width:848px;height:1.2px;background:#727272;"></div>
<div style="left:1098px;top:62px;width:7px;height:579px;background:#3e3e3e;"></div>
<div style="left:1105px;top:36px;width:15px;height:606px;background:#f0f0f0;"></div>
<svg style="left:0;top:0" width="1280" height="700" viewBox="0 0 1280 700">
<defs><pattern id="dots" x="249.8" y="62.3" width="11.68" height="17.51" patternUnits="userSpaceOnUse"><rect x="0" y="0" width="1.3" height="1.3" fill="#8e8e8e"/></pattern>
<clipPath id="cv"><rect x="250.5" y="62" width="847.5" height="579"/></clipPath></defs>
<g clip-path="url(#cv)">
<rect x="250" y="62" width="848" height="579" fill="url(#dots)"/>
<path d="M250 113.3 H1098" stroke="#777" stroke-width="1" stroke-dasharray="7.5 5 2.5 5" fill="none"/>
<path d="M300.6 62 V641 M1048.6 62 V641" stroke="#555" stroke-width="1.2" stroke-dasharray="7.5 5 2.5 5" fill="none"/>
</g></svg>
<div style="left:331px;top:131.4px;width:314px;height:220.2px;border:1px solid #2e2e2e;"></div>
<div style="left:332.5px;top:159.5px;width:204px;height:33px;background:#fff;"></div>
<div style="left:332.5px;top:159.5px;width:43.5px;height:109.5px;background:#fff;"></div>
<span class="t" style="left:415.70px;top:132.80px;font-size:11px;line-height:15px;color:#2e2e2e;transform:scaleX(0.9597);transform-origin:0 50%;-webkit-text-stroke:.18px #2e2e2e;">Peak Results</span>
<span class="t" style="left:415.70px;top:145.80px;font-size:11px;line-height:15px;color:#2e2e2e;transform:scaleX(0.9451);transform-origin:0 50%;-webkit-text-stroke:.18px #2e2e2e;">Label: SST10</span>
<div style="left:332px;top:159.3px;width:313px;height:1px;background:#c4c4c4;"></div>
<div style="left:332px;top:191.8px;width:313px;height:1px;background:#c4c4c4;"></div>
<div style="left:332px;top:210.8px;width:313px;height:1px;background:#c4c4c4;"></div>
<div style="left:332px;top:229.8px;width:313px;height:1px;background:#c4c4c4;"></div>
<div style="left:332px;top:249.2px;width:313px;height:1px;background:#c4c4c4;"></div>
<div style="left:332px;top:268.3px;width:313px;height:1px;background:#c4c4c4;"></div>
<div style="left:332.3px;top:159.3px;width:1px;height:109.0px;background:#c4c4c4;"></div>
<div style="left:375.9px;top:159.3px;width:1px;height:109.0px;background:#c4c4c4;"></div>
<div style="left:416.4px;top:159.3px;width:1px;height:109.0px;background:#c4c4c4;"></div>
<div style="left:455.9px;top:159.3px;width:1px;height:109.0px;background:#c4c4c4;"></div>
<div style="left:495.8px;top:159.3px;width:1px;height:109.0px;background:#c4c4c4;"></div>
<span class="t" style="left:383.60px;top:169.80px;font-size:11px;line-height:15px;color:#2e2e2e;transform:scaleX(0.9546);transform-origin:0 50%;-webkit-text-stroke:.18px #2e2e2e;">Label</span>
<span class="t" style="left:420.81px;top:162.60px;font-size:11px;line-height:15px;color:#2e2e2e;transform:scaleX(0.9619);transform-origin:50% 50%;-webkit-text-stroke:.18px #2e2e2e;">Result</span>
<span class="t" style="left:432.11px;top:176.20px;font-size:11px;line-height:15px;color:#2e2e2e;transform:scaleX(0.9980);transform-origin:50% 50%;-webkit-text-stroke:.18px #2e2e2e;">Id</span>
<span class="t" style="left:460.61px;top:162.60px;font-size:11px;line-height:15px;color:#2e2e2e;transform:scaleX(0.9619);transform-origin:50% 50%;-webkit-text-stroke:.18px #2e2e2e;">Result</span>
<span class="t" style="left:473.14px;top:176.20px;font-size:11px;line-height:15px;color:#2e2e2e;transform:scaleX(0.9980);transform-origin:50% 50%;-webkit-text-stroke:.18px #2e2e2e;">#</span>
<span class="t" style="left:500.20px;top:162.60px;font-size:11px;line-height:15px;color:#2e2e2e;transform:scaleX(0.9980);transform-origin:0 50%;-webkit-text-stroke:.18px #2e2e2e;"># of Results</span>
<span class="t" style="left:513.50px;top:176.20px;font-size:11px;line-height:15px;color:#2e2e2e;transform:scaleX(0.9980);transform-origin:0 50%;-webkit-text-stroke:.18px #2e2e2e;">Stored</span>
<svg style="left:352.5px;top:174px" width="4" height="5" viewBox="0 0 4 5"><path d="M.5 .5 L3.5 2.5 L.5 4.5 Z" fill="#7ac8b8"/></svg>
<span class="t" style="left:350.54px;top:195.10px;font-size:11px;line-height:15px;color:#2e2e2e;transform:scaleX(0.9980);transform-origin:50% 50%;-webkit-text-stroke:.18px #2e2e2e;">1</span>
<span class="t" style="left:380.60px;top:195.10px;font-size:11px;line-height:15px;color:#2e2e2e;transform:scaleX(0.9423);transform-origin:0 50%;-webkit-text-stroke:.18px #2e2e2e;">SST10</span>
<span class="t" style="left:426.82px;top:195.10px;font-size:11px;line-height:15px;color:#2e2e2e;transform:scaleX(0.8904);transform-origin:100% 50%;-webkit-text-stroke:.18px #2e2e2e;">1088</span>
<span class="t" style="left:478.95px;top:195.10px;font-size:11px;line-height:15px;color:#2e2e2e;transform:scaleX(0.8082);transform-origin:100% 50%;-webkit-text-stroke:.18px #2e2e2e;">19</span>
<span class="t" style="left:350.54px;top:214.30px;font-size:11px;line-height:15px;color:#2e2e2e;transform:scaleX(0.9980);transform-origin:50% 50%;-webkit-text-stroke:.18px #2e2e2e;">2</span>
<span class="t" style="left:380.60px;top:214.30px;font-size:11px;line-height:15px;color:#2e2e2e;transform:scaleX(0.9423);transform-origin:0 50%;-webkit-text-stroke:.18px #2e2e2e;">SST10</span>
<span class="t" style="left:426.82px;top:214.30px;font-size:11px;line-height:15px;color:#2e2e2e;transform:scaleX(0.8904);transform-origin:100% 50%;-webkit-text-stroke:.18px #2e2e2e;">1092</span>
<span class="t" style="left:478.95px;top:214.30px;font-size:11px;line-height:15px;color:#2e2e2e;transform:scaleX(0.8082);transform-origin:100% 50%;-webkit-text-stroke:.18px #2e2e2e;">19</span>
<span class="t" style="left:341.20px;top:233.60px;font-size:11px;line-height:15px;color:#2e2e2e;transform:scaleX(0.9480);transform-origin:0 50%;-webkit-text-stroke:.18px #2e2e2e;">Mean</span>
<span class="t" style="left:336.90px;top:252.60px;font-size:11px;line-height:15px;color:#2e2e2e;transform:scaleX(0.9511);transform-origin:0 50%;-webkit-text-stroke:.18px #2e2e2e;">% RSD</span>
<div style="left:331px;top:131.4px;width:6.5px;height:6.5px;background:#000;"></div>
<div style="left:478px;top:131.4px;width:6.5px;height:6.5px;background:#000;"></div>
<div style="left:331px;top:237.5px;width:6.5px;height:6.5px;background:#000;"></div>
<div style="left:331px;top:345.2px;width:6.5px;height:6.5px;background:#000;"></div>
<div style="left:478px;top:345.2px;width:6.5px;height:6.5px;background:#000;"></div>
<div style="left:331px;top:359.4px;width:314px;height:220px;border:1px solid #3a3a3a;"></div>
<div style="left:332.5px;top:374px;width:204px;height:32.5px;background:#fff;"></div>
<div style="left:332.5px;top:374px;width:19.5px;height:186px;background:#fff;"></div>
<span class="t" style="left:426.30px;top:360.00px;font-size:11px;line-height:15px;color:#2e2e2e;transform:scaleX(0.9664);transform-origin:0 50%;-webkit-text-stroke:.18px #2e2e2e;">Result Sign Off</span>
<div style="left:332px;top:373.7px;width:259px;height:1px;background:#c4c4c4;"></div>
<div style="left:332px;top:406.1px;width:259px;height:1px;background:#c4c4c4;"></div>
<div style="left:332px;top:425.35px;width:259px;height:1px;background:#c4c4c4;"></div>
<div style="left:332px;top:444.6px;width:259px;height:1px;background:#c4c4c4;"></div>
<div style="left:332px;top:463.85px;width:259px;height:1px;background:#c4c4c4;"></div>
<div style="left:332px;top:483.1px;width:259px;height:1px;background:#c4c4c4;"></div>
<div style="left:332px;top:502.35px;width:259px;height:1px;background:#c4c4c4;"></div>
<div style="left:332px;top:521.6px;width:259px;height:1px;background:#c4c4c4;"></div>
<div style="left:332px;top:540.85px;width:259px;height:1px;background:#c4c4c4;"></div>
<div style="left:332px;top:560.1px;width:259px;height:1px;background:#c4c4c4;"></div>
<div style="left:332.3px;top:373.7px;width:1px;height:186.59999999999997px;background:#c4c4c4;"></div>
<div style="left:351.6px;top:373.7px;width:1px;height:186.59999999999997px;background:#c4c4c4;"></div>
<div style="left:402.8px;top:373.7px;width:1px;height:186.59999999999997px;background:#c4c4c4;"></div>
<div style="left:476.9px;top:373.7px;width:1px;height:186.59999999999997px;background:#c4c4c4;"></div>
<div style="left:590px;top:373.7px;width:1px;height:186.59999999999997px;background:#c4c4c4;"></div>
<span class="t" style="left:356.00px;top:383.40px;font-size:11px;line-height:15px;color:#2e2e2e;transform:scaleX(0.9857);transform-origin:0 50%;-webkit-text-stroke:.18px #2e2e2e;">Result Id</span>
<span class="t" style="left:407.70px;top:383.40px;font-size:11px;line-height:15px;color:#2e2e2e;transform:scaleX(0.9589);transform-origin:0 50%;-webkit-text-stroke:.18px #2e2e2e;">SampleName</span>
<span class="t" style="left:515.00px;top:376.80px;font-size:11px;line-height:15px;color:#2e2e2e;transform:scaleX(0.9980);transform-origin:0 50%;-webkit-text-stroke:.18px #2e2e2e;">Signoff</span>
<span class="t" style="left:509.50px;top:390.00px;font-size:11px;line-height:15px;color:#2e2e2e;transform:scaleX(0.9980);transform-origin:0 50%;-webkit-text-stroke:.18px #2e2e2e;">Full Name</span>
<span class="t" style="left:339.24px;top:409.40px;font-size:11px;line-height:15px;color:#2e2e2e;transform:scaleX(0.9980);transform-origin:50% 50%;-webkit-text-stroke:.18px #2e2e2e;">1</span>
<span class="t" style="left:373.52px;top:409.40px;font-size:11px;line-height:15px;color:#2e2e2e;transform:scaleX(0.8904);transform-origin:100% 50%;-webkit-text-stroke:.18px #2e2e2e;">1023</span>
<span class="t" style="left:407.00px;top:409.40px;font-size:11px;line-height:15px;color:#2e2e2e;transform:scaleX(0.9735);transform-origin:0 50%;-webkit-text-stroke:.18px #2e2e2e;">blank</span>
<span class="t" style="left:480.50px;top:409.40px;font-size:11px;line-height:15px;color:#2e2e2e;transform:scaleX(0.9888);transform-origin:0 50%;-webkit-text-stroke:.18px #2e2e2e;">Ilse Hoes (consultant)</span>
<span class="t" style="left:339.24px;top:428.65px;font-size:11px;line-height:15px;color:#2e2e2e;transform:scaleX(0.9980);transform-origin:50% 50%;-webkit-text-stroke:.18px #2e2e2e;">2</span>
<span class="t" style="left:373.52px;top:428.65px;font-size:11px;line-height:15px;color:#2e2e2e;transform:scaleX(0.8904);transform-origin:100% 50%;-webkit-text-stroke:.18px #2e2e2e;">1088</span>
<span class="t" style="left:407.00px;top:428.65px;font-size:11px;line-height:15px;color:#2e2e2e;transform:scaleX(1.0293);transform-origin:0 50%;-webkit-text-stroke:.18px #2e2e2e;">Std</span>
<span class="t" style="left:480.50px;top:428.65px;font-size:11px;line-height:15px;color:#2e2e2e;transform:scaleX(0.9888);transform-origin:0 50%;-webkit-text-stroke:.18px #2e2e2e;">Ilse Hoes (consultant)</span>
<span class="t" style="left:339.24px;top:447.90px;font-size:11px;line-height:15px;color:#2e2e2e;transform:scaleX(0.9980);transform-origin:50% 50%;-webkit-text-stroke:.18px #2e2e2e;">3</span>
<span class="t" style="left:373.52px;top:447.90px;font-size:11px;line-height:15px;color:#2e2e2e;transform:scaleX(0.8904);transform-origin:100% 50%;-webkit-text-stroke:.18px #2e2e2e;">1092</span>
<span class="t" style="left:407.00px;top:447.90px;font-size:11px;line-height:15px;color:#2e2e2e;transform:scaleX(1.0293);transform-origin:0 50%;-webkit-text-stroke:.18px #2e2e2e;">Std</span>
<span class="t" style="left:480.50px;top:447.90px;font-size:11px;line-height:15px;color:#2e2e2e;transform:scaleX(0.9888);transform-origin:0 50%;-webkit-text-stroke:.18px #2e2e2e;">Ilse Hoes (consultant)</span>
<span class="t" style="left:339.24px;top:467.15px;font-size:11px;line-height:15px;color:#2e2e2e;transform:scaleX(0.9980);transform-origin:50% 50%;-webkit-text-stroke:.18px #2e2e2e;">4</span>
<span class="t" style="left:373.52px;top:467.15px;font-size:11px;line-height:15px;color:#2e2e2e;transform:scaleX(0.8904);transform-origin:100% 50%;-webkit-text-stroke:.18px #2e2e2e;">1097</span>
<span class="t" style="left:407.00px;top:467.15px;font-size:11px;line-height:15px;color:#2e2e2e;transform:scaleX(1.0293);transform-origin:0 50%;-webkit-text-stroke:.18px #2e2e2e;">Std</span>
<span class="t" style="left:480.50px;top:467.15px;font-size:11px;line-height:15px;color:#2e2e2e;transform:scaleX(0.9888);transform-origin:0 50%;-webkit-text-stroke:.18px #2e2e2e;">Ilse Hoes (consultant)</span>
<span class="t" style="left:339.24px;top:486.40px;font-size:11px;line-height:15px;color:#2e2e2e;transform:scaleX(0.9980);transform-origin:50% 50%;-webkit-text-stroke:.18px #2e2e2e;">5</span>
<span class="t" style="left:374.34px;top:486.40px;font-size:11px;line-height:15px;color:#2e2e2e;transform:scaleX(0.9215);transform-origin:100% 50%;-webkit-text-stroke:.18px #2e2e2e;">1101</span>
<span class="t" style="left:407.00px;top:486.40px;font-size:11px;line-height:15px;color:#2e2e2e;transform:scaleX(1.0293);transform-origin:0 50%;-webkit-text-stroke:.18px #2e2e2e;">Std</span>
<span class="t" style="left:480.50px;top:486.40px;font-size:11px;line-height:15px;color:#2e2e2e;transform:scaleX(0.9888);transform-origin:0 50%;-webkit-text-stroke:.18px #2e2e2e;">Ilse Hoes (consultant)</span>
<span class="t" style="left:339.24px;top:505.65px;font-size:11px;line-height:15px;color:#2e2e2e;transform:scaleX(0.9980);transform-origin:50% 50%;-webkit-text-stroke:.18px #2e2e2e;">6</span>
<span class="t" style="left:374.34px;top:505.65px;font-size:11px;line-height:15px;color:#2e2e2e;transform:scaleX(0.9215);transform-origin:100% 50%;-webkit-text-stroke:.18px #2e2e2e;">1107</span>
<span class="t" style="left:407.00px;top:505.65px;font-size:11px;line-height:15px;color:#2e2e2e;transform:scaleX(0.9849);transform-origin:0 50%;-webkit-text-stroke:.18px #2e2e2e;">Unk sample</span>
<span class="t" style="left:480.50px;top:505.65px;font-size:11px;line-height:15px;color:#2e2e2e;transform:scaleX(0.9888);transform-origin:0 50%;-webkit-text-stroke:.18px #2e2e2e;">Ilse Hoes (consultant)</span>
<span class="t" style="left:339.24px;top:524.90px;font-size:11px;line-height:15px;color:#2e2e2e;transform:scaleX(0.9980);transform-origin:50% 50%;-webkit-text-stroke:.18px #2e2e2e;">7</span>
<span class="t" style="left:375.16px;top:524.90px;font-size:11px;line-height:15px;color:#2e2e2e;transform:scaleX(0.9543);transform-origin:100% 50%;-webkit-text-stroke:.18px #2e2e2e;">1113</span>
<span class="t" style="left:407.00px;top:524.90px;font-size:11px;line-height:15px;color:#2e2e2e;transform:scaleX(0.9849);transform-origin:0 50%;-webkit-text-stroke:.18px #2e2e2e;">Unk sample</span>
<span class="t" style="left:480.50px;top:524.90px;font-size:11px;line-height:15px;color:#2e2e2e;transform:scaleX(0.9888);transform-origin:0 50%;-webkit-text-stroke:.18px #2e2e2e;">Ilse Hoes (consultant)</span>
<span class="t" style="left:339.24px;top:544.15px;font-size:11px;line-height:15px;color:#2e2e2e;transform:scaleX(0.9980);transform-origin:50% 50%;-webkit-text-stroke:.18px #2e2e2e;">8</span>
<span class="t" style="left:375.16px;top:544.15px;font-size:11px;line-height:15px;color:#2e2e2e;transform:scaleX(0.9543);transform-origin:100% 50%;-webkit-text-stroke:.18px #2e2e2e;">1119</span>
<span class="t" style="left:407.00px;top:544.15px;font-size:11px;line-height:15px;color:#2e2e2e;transform:scaleX(0.9922);transform-origin:0 50%;-webkit-text-stroke:.18px #2e2e2e;">Control Std</span>
<span class="t" style="left:480.50px;top:544.15px;font-size:11px;line-height:15px;color:#2e2e2e;transform:scaleX(0.9888);transform-origin:0 50%;-webkit-text-stroke:.18px #2e2e2e;">Ilse Hoes (consultant)</span>
<div style="left:535.2px;top:119.8px;width:553.2px;height:379.4px;background:#f3f3f3;border-radius:8px;box-shadow:0 16px 38px 4px rgba(0,0,0,.2),0 0 3px rgba(0,0,0,.32);overflow:hidden;"><div style="left:0;top:0;width:553px;height:52px;background:linear-gradient(#e1f7f6 0,#e6f8f7 38%,#e9f6f5 50%,#efefef 60%,#f0f0f0 100%);"></div></div>
<span class="t" style="left:542.50px;top:125.40px;font-size:10.6px;line-height:15px;color:#1c1c1c;transform:scaleX(0.9143);transform-origin:0 50%;-webkit-text-stroke:.18px #1c1c1c;">Table Properties</span>
<svg style="left:1069.5px;top:128px" width="9" height="9" viewBox="0 0 9 9"><path d="M.5 .5 L8.5 8.5 M8.5 .5 L.5 8.5" stroke="#333" stroke-width="1.1" fill="none"/></svg>
<div style="left:541px;top:169px;width:540px;height:299.5px;background:#fafafa;border:1px solid #efefef;"></div>
<div style="left:747.5px;top:149.5px;width:37px;height:20.5px;background:#fafafa;border:1px solid #efefef;border-bottom:none;"></div>
<span class="t" style="left:547.50px;top:154.70px;font-size:10.3px;line-height:14px;color:#1c1c1c;transform:scaleX(0.8609);transform-origin:0 50%;-webkit-text-stroke:.18px #1c1c1c;">Table</span>
<span class="t" style="left:581.50px;top:154.70px;font-size:10.3px;line-height:14px;color:#1c1c1c;transform:scaleX(0.8287);transform-origin:0 50%;-webkit-text-stroke:.18px #1c1c1c;">Component Summary</span>
<span class="t" style="left:675.50px;top:154.70px;font-size:10.3px;line-height:14px;color:#1c1c1c;transform:scaleX(0.8454);transform-origin:0 50%;-webkit-text-stroke:.18px #1c1c1c;">Peaks</span>
<span class="t" style="left:709.70px;top:154.70px;font-size:10.3px;line-height:14px;color:#1c1c1c;transform:scaleX(0.8325);transform-origin:0 50%;-webkit-text-stroke:.18px #1c1c1c;">Order By</span>
<span class="t" style="left:754.50px;top:153.10px;font-size:10.3px;line-height:14px;color:#1c1c1c;transform:scaleX(0.8150);transform-origin:0 50%;-webkit-text-stroke:.18px #1c1c1c;">Fonts</span>
<span class="t" style="left:788.70px;top:154.70px;font-size:10.3px;line-height:14px;color:#1c1c1c;transform:scaleX(0.8164);transform-origin:0 50%;-webkit-text-stroke:.18px #1c1c1c;">Colors</span>
<span class="t" style="left:824.50px;top:154.70px;font-size:10.3px;line-height:14px;color:#1c1c1c;transform:scaleX(0.8191);transform-origin:0 50%;-webkit-text-stroke:.18px #1c1c1c;">Name</span>
<div style="left:549.5px;top:177px;width:259px;height:67px;border:1px solid #e4e4e4;border-radius:2px;box-shadow:1px 1px 0 #fff, inset 1px 1px 0 #fff;"></div>
<div style="left:553.5px;top:171px;width:53px;height:12px;background:#fafafa;"></div>
<span class="t" style="left:556.50px;top:170.30px;font-size:10.3px;line-height:14px;color:#1c1c1c;transform:scaleX(0.8582);transform-origin:0 50%;-webkit-text-stroke:.18px #1c1c1c;">Font To Edit</span>
<div style="left:550.5px;top:251px;width:258.5px;height:68.5px;border:1px solid #e4e4e4;border-radius:2px;box-shadow:1px 1px 0 #fff, inset 1px 1px 0 #fff;"></div>
<div style="left:554px;top:245px;width:64px;height:12px;background:#fafafa;"></div>
<span class="t" style="left:557.00px;top:244.90px;font-size:10.3px;line-height:14px;color:#1c1c1c;transform:scaleX(0.8518);transform-origin:0 50%;-webkit-text-stroke:.18px #1c1c1c;">Characteristics</span>
<div style="left:557.5px;top:185.3px;width:11px;height:11px;border-radius:50%;background:#0a63c2;"></div>
<div style="left:560.6px;top:188.4px;width:4.8px;height:4.8px;border-radius:50%;background:#fff;"></div>
<span class="t" style="left:571.50px;top:185.00px;font-size:10.3px;line-height:14px;color:#1c1c1c;transform:scaleX(0.8733);transform-origin:0 50%;-webkit-text-stroke:.18px #1c1c1c;">Table Title</span>
<div style="left:557.5px;top:200.5px;width:11px;height:11px;border-radius:50%;background:#f4f4f4;border:1px solid #7a7a7a;"></div>
<span class="t" style="left:570.50px;top:199.50px;font-size:10.3px;line-height:14px;color:#1c1c1c;transform:scaleX(0.8490);transform-origin:0 50%;-webkit-text-stroke:.18px #1c1c1c;">Column Headings</span>
<div style="left:557.5px;top:215.5px;width:11px;height:11px;border-radius:50%;background:#f4f4f4;border:1px solid #7a7a7a;"></div>
<span class="t" style="left:571.00px;top:214.50px;font-size:10.3px;line-height:14px;color:#1c1c1c;transform:scaleX(0.8263);transform-origin:0 50%;-webkit-text-stroke:.18px #1c1c1c;">Cell Data</span>
<div style="left:557.5px;top:230.5px;width:11px;height:11px;border-radius:50%;background:#f4f4f4;border:1px solid #7a7a7a;"></div>
<span class="t" style="left:571.00px;top:229.50px;font-size:10.3px;line-height:14px;color:#1c1c1c;transform:scaleX(0.8479);transform-origin:0 50%;-webkit-text-stroke:.18px #1c1c1c;">Faulted Data</span>
<div style="left:680.8px;top:185.3px;width:11px;height:11px;border-radius:50%;background:#f8f8f8;border:1px solid #c8c8c8;"></div>
<span class="t" style="left:694.50px;top:185.00px;font-size:10.3px;line-height:14px;color:#a4a4a4;transform:scaleX(0.8603);transform-origin:0 50%;">Highlighted Data</span>
<div style="left:555px;top:259.7px;width:10.8px;height:10.8px;background:#f6f6f6;border:1px solid #6e6e6e;border-radius:2.5px;"></div>
<span class="t" style="left:568.70px;top:258.50px;font-size:10.3px;line-height:14px;color:#1c1c1c;transform:scaleX(0.8152);transform-origin:0 50%;-webkit-text-stroke:.18px #1c1c1c;">Bold</span>
<div style="left:555px;top:274.7px;width:10.8px;height:10.8px;background:#f6f6f6;border:1px solid #6e6e6e;border-radius:2.5px;"></div>
<span class="t" style="left:568.70px;top:273.50px;font-size:10.3px;line-height:14px;color:#1c1c1c;transform:scaleX(0.8401);transform-origin:0 50%;-webkit-text-stroke:.18px #1c1c1c;">Italic</span>
<div style="left:555px;top:289.7px;width:10.8px;height:10.8px;background:#f6f6f6;border:1px solid #6e6e6e;border-radius:2.5px;"></div>
<span class="t" style="left:568.70px;top:288.50px;font-size:10.3px;line-height:14px;color:#1c1c1c;transform:scaleX(0.8235);transform-origin:0 50%;-webkit-text-stroke:.18px #1c1c1c;">Underline</span>
<div style="left:555px;top:304.7px;width:10.8px;height:10.8px;background:#f6f6f6;border:1px solid #6e6e6e;border-radius:2.5px;"></div>
<span class="t" style="left:568.70px;top:303.50px;font-size:10.3px;line-height:14px;color:#1c1c1c;transform:scaleX(0.8440);transform-origin:0 50%;-webkit-text-stroke:.18px #1c1c1c;">Strikeout</span>
<span class="t" style="left:637.00px;top:270.50px;font-size:10.3px;line-height:14px;color:#1c1c1c;transform:scaleX(0.8078);transform-origin:0 50%;-webkit-text-stroke:.18px #1c1c1c;">Name:</span>
<div style="left:663.7px;top:268.8px;width:131px;height:16.6px;background:#fff;border:1px solid #ececec;border-bottom:1px solid #8e8e8e;border-radius:2.5px;"></div>
<span class="t" style="left:667.00px;top:270.70px;font-size:10.3px;line-height:14px;color:#1c1c1c;transform:scaleX(0.8006);transform-origin:0 50%;-webkit-text-stroke:.18px #1c1c1c;">Arial</span>
<svg style="left:783.5px;top:274.6px" width="8" height="5" viewBox="0 0 8 5"><path d="M.6 .6 L4 4 L7.4 .6" fill="none" stroke="#555" stroke-width="1"/></svg>
<span class="t" style="left:643.50px;top:297.10px;font-size:10.3px;line-height:14px;color:#1c1c1c;transform:scaleX(0.7858);transform-origin:0 50%;-webkit-text-stroke:.18px #1c1c1c;">Size:</span>
<div style="left:663.7px;top:295px;width:39px;height:17.4px;background:#fff;border:1px solid #8c8c8c;border-radius:1px;"></div>
<div style="left:688.7px;top:295px;width:14px;height:17.4px;background:#d8eafb;border:1px solid #2f7fd0;border-radius:1.5px;"></div>
<svg style="left:691.5px;top:301.5px" width="8" height="5" viewBox="0 0 8 5"><path d="M.6 .6 L4 4 L7.4 .6" fill="none" stroke="#333" stroke-width="1"/></svg>
<span class="t" style="left:666.50px;top:297.10px;font-size:10.3px;line-height:14px;color:#1c1c1c;transform:scaleX(0.8196);transform-origin:0 50%;-webkit-text-stroke:.18px #1c1c1c;">8</span>
<svg style="left:689.5px;top:302.5px" width="9" height="14" viewBox="0 0 9 14"><path d="M.8 .8 V10.6 L3.2 8.4 L5 12.6 L6.6 11.9 L4.9 7.8 H8 Z" fill="#fff" stroke="#111" stroke-width=".9" stroke-linejoin="round"/></svg>
<div style="left:721px;top:294.8px;width:64px;height:17.4px;background:#f3f3f3;border:1px solid #fff;border-right:1.5px solid #4a4a4a;border-bottom:1.5px solid #4a4a4a;box-shadow:inset -1px -1px 0 #a8a8a8;"></div>
<span class="t" style="left:728.50px;top:296.90px;font-size:10.3px;line-height:14px;color:#1c1c1c;transform:scaleX(0.8541);transform-origin:0 50%;-webkit-text-stroke:.18px #1c1c1c;">Text Color..</span>
<div style="left:747px;top:308.8px;width:6px;height:1px;background:#333;"></div>
<div style="left:774px;top:300px;width:6.5px;height:7px;background:#000;"></div>
<div style="left:553px;top:328px;width:213px;height:48.5px;background:#fff;border-top:1.5px solid #6a6a6a;border-left:1.5px solid #6a6a6a;border-right:1px solid #f4f4f4;border-bottom:1px solid #f4f4f4;"></div>
<span class="t" style="left:634.50px;top:347.00px;font-size:9.3px;line-height:13px;color:#1c1c1c;transform:scaleX(0.9490);transform-origin:0 50%;-webkit-text-stroke:.18px #1c1c1c;">linearity_LDL</span>
<div style="left:819.3px;top:475px;width:61px;height:17.7px;background:#fdfdfd;border:1.3px solid #2b7fd3;border-radius:3.5px;"></div>
<span class="t" style="left:842.50px;top:477.55px;font-size:10.3px;line-height:14px;color:#1e1e1e;transform:scaleX(0.9066);transform-origin:0 50%;">OK</span>
<div style="left:887.5px;top:475px;width:59.8px;height:17.7px;background:#fdfdfd;border:1px solid #e2e2e2;border-bottom-color:#c6c6c6;border-radius:3.5px;"></div>
<span class="t" style="left:902.70px;top:477.55px;font-size:10.3px;line-height:14px;color:#1e1e1e;transform:scaleX(0.8827);transform-origin:0 50%;">Cancel</span>
<div style="left:955.3px;top:475px;width:59.5px;height:17.7px;background:#f5f5f5;border:1px solid #f0f0f0;border-radius:3.5px;"></div>
<span class="t" style="left:973.50px;top:477.55px;font-size:10.3px;line-height:14px;color:#a8a8a8;transform:scaleX(0.8344);transform-origin:0 50%;">Apply</span>
<div style="left:1022px;top:475px;width:60px;height:17.7px;background:#fdfdfd;border:1px solid #e2e2e2;border-bottom-color:#c6c6c6;border-radius:3.5px;"></div>
<span class="t" style="left:1042.50px;top:477.55px;font-size:10.3px;line-height:14px;color:#1e1e1e;transform:scaleX(0.8496);transform-origin:0 50%;">Help</span>
<div style="left:0px;top:641.5px;width:1120px;height:18.5px;background:#f0f0f0;border-top:1px solid #e2e2e2;"></div>
<span class="t" style="left:2.00px;top:645.30px;font-size:10.3px;line-height:14px;color:#2a2a2a;transform:scaleX(0.9031);transform-origin:0 50%;-webkit-text-stroke:.18px #2a2a2a;">For Help, press F1</span>
<span class="t" style="left:692.50px;top:645.30px;font-size:10.3px;line-height:14px;color:#2a2a2a;transform:scaleX(0.9223);transform-origin:0 50%;-webkit-text-stroke:.18px #2a2a2a;">Project: Reports_CoffeeBreak</span>
<span class="t" style="left:832.80px;top:645.30px;font-size:10.3px;line-height:14px;color:#2a2a2a;transform:scaleX(0.9660);transform-origin:0 50%;-webkit-text-stroke:.18px #2a2a2a;">Summary By All</span>
<span class="t" style="left:1009.50px;top:645.60px;font-size:10.3px;line-height:14px;color:#2a2a2a;transform:scaleX(0.8999);transform-origin:0 50%;-webkit-text-stroke:.18px #2a2a2a;">x:  2,11&quot;</span>
<span class="t" style="left:1066.00px;top:645.60px;font-size:10.3px;line-height:14px;color:#2a2a2a;transform:scaleX(0.9215);transform-origin:0 50%;-webkit-text-stroke:.18px #2a2a2a;">y:  2,29&quot;</span>
<div style="left:827.5px;top:644px;width:1px;height:15px;background:#dedede;"></div>
<div style="left:933px;top:644px;width:1px;height:15px;background:#dedede;"></div>
<div style="left:1005px;top:644px;width:1px;height:15px;background:#dedede;"></div>
<div style="left:1062.5px;top:644px;width:1px;height:15px;background:#dedede;"></div>
<div style="left:0px;top:660px;width:1120px;height:40px;background:#c0eeed;border-top:1px solid #d4e4e4;"></div>
<div style="left:401.7px;top:670.6px;width:9.3px;height:9.3px;background:linear-gradient(135deg,#4ab6f0,#0c6cd4);border-radius:1px;"></div>
<div style="left:412px;top:670.6px;width:9.3px;height:9.3px;background:linear-gradient(135deg,#4ab6f0,#0c6cd4);border-radius:1px;"></div>
<div style="left:401.7px;top:680.8px;width:9.3px;height:9.3px;background:linear-gradient(135deg,#4ab6f0,#0c6cd4);border-radius:1px;"></div>
<div style="left:412px;top:680.8px;width:9.3px;height:9.3px;background:linear-gradient(135deg,#4ab6f0,#0c6cd4);border-radius:1px;"></div>
<div style="left:433.6px;top:667.6px;width:181.4px;height:25px;background:#e8f8f8;border-radius:12.5px;border:1px solid #d8f0f0;box-shadow:0 1px 1px rgba(0,0,0,.08);"></div>
<svg style="left:443px;top:674px" width="12" height="12" viewBox="0 0 12 12"><circle cx="5" cy="5" r="4" fill="none" stroke="#222" stroke-width="1.3"/><path d="M8 8 L11.3 11.3" stroke="#222" stroke-width="1.4" stroke-linecap="round"/></svg>
<span class="t" style="left:463.60px;top:672.90px;font-size:11.6px;line-height:16px;color:#5a5a5a;transform:scaleX(0.9201);transform-origin:0 50%;">Search</span>
<svg style="left:627.5px;top:670px" width="19" height="21" viewBox="0 0 19 21"><path d="M2 0 H18.5 V20.5 H2 Q6 15 5.5 10 Q5 5 2 0 Z" fill="#8fa0a4"/><path d="M2 0 Q5 5 5.5 10 Q6 15 2 20.5 Q0 15 .8 10 Q1.5 5 0 0 Z" fill="#1f8f86"/><path d="M11.5 0 H18.5 V20.5 H13 Z" fill="#6f8288" opacity=".7"/><path d="M7.5 4 H14.5 V6.4 H10.3 V9 H14 V11.3 H10.3 V14.2 H14.5 V16.6 H7.5 Z" fill="#fff"/></svg>
<div style="left:634px;top:693.2px;width:4.5px;height:2px;background:#7d8c8c;border-radius:1px;"></div>
<svg style="left:663px;top:671.5px" width="20" height="18" viewBox="0 0 20 18"><path d="M.6 17.4 V2 Q.6 .8 1.8 .8 H7 L9 3 H18.4 Q19.4 3 19.4 4 V17.4 Z" fill="#f2e21e" stroke="#3a3a1a" stroke-width="1"/><path d="M10 5.5 L13.2 10.5 L10 15.5 L6.8 10.5 Z" fill="#1a8a5a"/><path d="M10 8 L11.6 10.5 L10 13 L8.4 10.5 Z" fill="#e8f8e8"/></svg>
<div style="left:670px;top:693.2px;width:4.5px;height:2px;background:#7d8c8c;border-radius:1px;"></div>
<div style="left:695px;top:665.5px;width:29px;height:31.5px;background:#d8f4f3;border-radius:4px;border:1px solid #cdeeed;"></div>
<svg style="left:699.5px;top:671.5px" width="20" height="18" viewBox="0 0 20 18"><rect x=".6" y=".6" width="18.8" height="16.8" rx="1.5" fill="#f6e61c" stroke="#4a3a1a" stroke-width="1"/><rect x="1.2" y="1.2" width="17.6" height="4.6" fill="#d8402a"/><path d="M3.5 1.5 V5.5 M6.5 1.5 V5.5 M9.5 1.5 V5.5 M12.5 1.5 V5.5 M15.5 1.5 V5.5" stroke="#f6c0a0" stroke-width="1"/><path d="M2.5 14.5 Q4 14.5 5.5 9.5 Q6.5 7.5 7.5 9.5 Q9 14.5 10 12 Q11.5 7 13 9.5 Q14.5 14.5 17.5 14.5" fill="none" stroke="#1a1a1a" stroke-width="1.4"/></svg>
<div style="left:702.5px;top:692.8px;width:13.2px;height:2.6px;background:#14787a;border-radius:1.3px;"></div>
<svg style="left:1018.5px;top:675.8px" width="10" height="7" viewBox="0 0 10 7"><path d="M.8 6 L5 1.5 L9.2 6" fill="none" stroke="#1e3838" stroke-width="1.5"/></svg>
<svg style="left:1043px;top:672.7px" width="15" height="14" viewBox="0 0 15 14"><rect x=".7" y="1.2" width="9.6" height="8.8" rx="1.2" fill="none" stroke="#2c4f4f" stroke-width="1.1"/><path d="M3.5 13 H9 M5 10.3 V12.8 M7.5 10.3 V12.8" stroke="#2c4f4f" stroke-width="1"/><rect x="10.3" y=".8" width="2.9" height="4.6" rx="1.2" fill="#c0eeed" stroke="#2c4f4f" stroke-width="1"/><path d="M11.8 5.4 V12.6" stroke="#2c4f4f" stroke-width="1"/></svg>
<svg style="left:1063px;top:673.7px" width="14" height="11" viewBox="0 0 14 11"><path d="M.7 3.7 H3 L6 .9 V10.1 L3 7.3 H.7 Z" fill="none" stroke="#2c4f4f" stroke-width="1"/><path d="M8.3 3.3 L12.7 7.7 M12.7 3.3 L8.3 7.7" stroke="#2c4f4f" stroke-width="1.1"/></svg>
<svg style="left:1091px;top:673.4px" width="12" height="13" viewBox="0 0 12 13"><path d="M2 9.5 V5.5 Q2 1 6 1 Q10 1 10 5.5 V9.5 L11 10.5 H1 Z" fill="none" stroke="#2c4f4f" stroke-width="1.1" stroke-linejoin="round"/><path d="M4.5 11.5 Q6 13 7.5 11.5" fill="none" stroke="#2c4f4f" stroke-width="1"/></svg>
<div style="left:1120px;top:119.5px;width:160px;height:580.5px;background:#000;"></div>
<svg style="left:0;top:0" width="1280" height="700" viewBox="0 0 1280 700">
<defs><clipPath id="camclip"><rect x="1066.8" y="0" width="213.2" height="119.6"/></clipPath>
<filter id="b1" x="-20%" y="-20%" width="140%" height="140%"><feGaussianBlur stdDeviation="0.9"/></filter>
<filter id="b3" x="-10%" y="-10%" width="120%" height="120%"><feGaussianBlur stdDeviation="5"/></filter>
<filter id="b2" x="-20%" y="-20%" width="140%" height="140%"><feGaussianBlur stdDeviation="1.4"/></filter>
<linearGradient id="jk" x1="0" y1="0" x2="0" y2="1"><stop offset="0" stop-color="#cdc4b5"/><stop offset=".5" stop-color="#c2b9ab"/><stop offset="1" stop-color="#b3ab9e"/></linearGradient>
<radialGradient id="skin" cx="50%" cy="42%" r="62%"><stop offset="0" stop-color="#ecccc0"/><stop offset=".65" stop-color="#ddb3a5"/><stop offset="1" stop-color="#c39585"/></radialGradient>
</defs>
<g clip-path="url(#camclip)">
<rect x="1066" y="0" width="214" height="120" fill="#fbfcfc"/>
<g filter="url(#b1)">
<!-- left network -->
<polygon points="1106.4,39.3 1089.5,57.5 1136.8,56.3" fill="#c3e2f4"/>
<polygon points="1106.4,39.3 1098,49 1136.8,56.3" fill="#add8f1"/>
<polygon points="1066,61.8 1086.8,59 1066,79" fill="#4aa8de"/>
<polygon points="1086.8,59 1136.8,56.3 1110,81 1066,81 1066,79" fill="#eef4f8"/>
<polygon points="1066,81 1110,81 1097.5,101.8 1066,92" fill="#cde6f4"/>
<polygon points="1110,81 1104,103 1097.5,101.8 1104,88" fill="#4aa8de"/>
<polygon points="1066,92 1097.5,101.8 1090,120 1066,120" fill="#e3eff6"/>
<!-- right network -->
<polygon points="1221.6,48 1192,53.5 1188.5,78.5" fill="#d3e8f5"/>
<polygon points="1221.6,48.2 1226,59 1190,77.5 1200,66" fill="#3b9ad8"/>
<polygon points="1275,27 1280,30 1280,38 1271.6,39" fill="#5ab0e0"/>
<g stroke="#8a8a8a" stroke-width=".6" fill="none" opacity=".7">
<path d="M1066,62 L1089.5,57.5 L1106.4,39.3 L1136.8,56.3 L1110,81 L1089.5,57.5 M1110,81 L1097.5,101.8 L1066,92 M1106.4,39.3 L1098,49 L1136.8,56.3 M1106.4,39.3 L1140,48"/>
<path d="M1192,42.5 L1218.5,43.5 L1221.6,48 L1233,73.5 L1192,77.5 M1218.5,43.5 L1230,33.5 L1271,27 L1275,27 M1271.6,39 L1280,56 M1233,73.5 L1250,58.5 L1271.6,39 M1250,58.5 L1276,80 M1250,58.5 L1230,33.5 M1192,77.5 L1233,73.5 M1226,59 L1233,73.5 M1254,85 L1276,80 L1280,88"/>
</g>
<g fill="#2a2a2a">
<circle cx="1106.4" cy="39.3" r="1.3"/><circle cx="1098" cy="49" r="1.2"/><circle cx="1089.5" cy="57.5" r="1.3"/><circle cx="1136.8" cy="56.3" r="1.1"/><circle cx="1110" cy="81" r="1.3"/><circle cx="1097.5" cy="101.8" r="1.3"/>
<circle cx="1218.5" cy="43.5" r="1.3"/><circle cx="1221.6" cy="48" r="1.3"/><circle cx="1233" cy="73.5" r="1.5"/><circle cx="1192" cy="77.5" r="1.2"/><circle cx="1271" cy="27" r="1.2"/><circle cx="1275" cy="27" r="1"/><circle cx="1271.6" cy="39" r="1"/>
</g>
<g fill="#6a6a6a" opacity=".8"><circle cx="1230" cy="33.5" r="1.6"/><circle cx="1250" cy="58.5" r="1.8"/><circle cx="1276" cy="80" r="1.8"/><circle cx="1254" cy="85" r="1.5"/></g>
</g>
<!-- person (drawn in zoomed coords: page = 1120 + z/5.738) -->
<g transform="translate(1120,0) scale(0.174277)" filter="url(#b3)">
<!-- jacket -->
<polygon points="-69,700 -40,602 0,545 60,520 150,490 95,560 70,700" fill="url(#jk)"/>
<polygon points="465,700 470,600 430,500 520,540 600,580 640,640 650,700" fill="#d5cec3"/>
<!-- shirt base -->
<polygon points="70,700 90,560 150,490 200,540 250,660 330,650 380,560 385,480 430,500 470,600 465,700" fill="#e9ebee"/>
<!-- neck / chest -->
<polygon points="195,520 372,495 384,560 335,655 250,665 188,600" fill="#d2a898"/>
<polygon points="250,665 335,655 345,700 240,700" fill="#dcdfe3"/>
<!-- shirt pattern -->
<g fill="none" stroke="#17284c" stroke-width="27" stroke-linejoin="round" stroke-linecap="round">
<path d="M98,575 L150,505 L196,565"/><path d="M78,648 L130,606 L186,655"/><path d="M140,700 L192,612"/>
<path d="M388,492 L424,525 L402,585"/><path d="M448,565 L456,700"/><path d="M378,606 L440,645 L384,700"/>
</g>
<path d="M388,485 L425,505 L415,530 L385,510 Z" fill="#2f7fc8"/>
<!-- hair -->
<path d="M112,305 L116,200 Q130,120 220,92 Q300,78 370,120 Q420,170 428,260 L416,315 L395,300 L350,190 L250,165 L150,190 L125,260 Z" fill="#463d39"/>
<path d="M150,150 Q230,100 330,110 Q260,120 170,190 Z" fill="#5e5550" opacity=".8"/>
<!-- face -->
<path d="M122,250 Q128,200 150,185 Q250,150 350,185 Q392,215 400,260 L405,330 Q406,385 398,430 Q390,475 365,508 Q338,540 300,548 Q270,556 240,552 Q200,543 172,520 Q142,490 130,440 Q119,400 118,350 Z" fill="url(#skin)"/>
<ellipse cx="412" cy="325" rx="12" ry="34" fill="#c99a8a"/>
<!-- cheeks shading -->
<ellipse cx="170" cy="440" rx="32" ry="45" fill="#d39a90" opacity=".45"/>
<ellipse cx="355" cy="440" rx="30" ry="45" fill="#d39a90" opacity=".4"/>
<!-- glasses -->
<rect x="114" y="312" width="104" height="80" rx="12" fill="#8a7470" fill-opacity=".32" stroke="#29282a" stroke-width="13"/>
<rect x="240" y="308" width="118" height="84" rx="12" fill="#8a7470" fill-opacity=".32" stroke="#29282a" stroke-width="13"/>
<path d="M218,330 H240 M358,322 L396,292" stroke="#2b2a2c" stroke-width="10"/>
<path d="M135,345 Q165,335 195,347 M262,343 Q298,332 335,345" stroke="#4a3a38" stroke-width="7" fill="none" opacity=".7"/>
<!-- nose / mouth -->
<path d="M215,395 Q205,430 228,440 Q250,444 262,432" stroke="#c08f82" stroke-width="6" fill="none" opacity=".8"/>
<path d="M205,472 Q245,458 292,474" stroke="#b57672" stroke-width="10" fill="none" stroke-linecap="round"/>
</g>
<!-- Waters -->
<text x="1067.6" y="18" font-family="Liberation Sans, sans-serif" font-size="15.2" fill="#4b4b4b" textLength="47" lengthAdjust="spacingAndGlyphs">Waters</text>
<text x="1114.6" y="9.5" font-family="Liberation Sans, sans-serif" font-size="3.2" fill="#4b4b4b">TM</text>
<!-- name tag -->
<rect x="1066.8" y="98.7" width="50.3" height="20.9" fill="#444" opacity=".62"/>
</g>
</svg>
<span class="t" style="left:1069.30px;top:102.20px;font-size:10.8px;line-height:15px;color:#fff;font-weight:bold;transform:scaleX(0.9068);transform-origin:0 50%;-webkit-text-stroke:.2px #fff;">Ilse Hoes</span>
</div>
</body></html>
